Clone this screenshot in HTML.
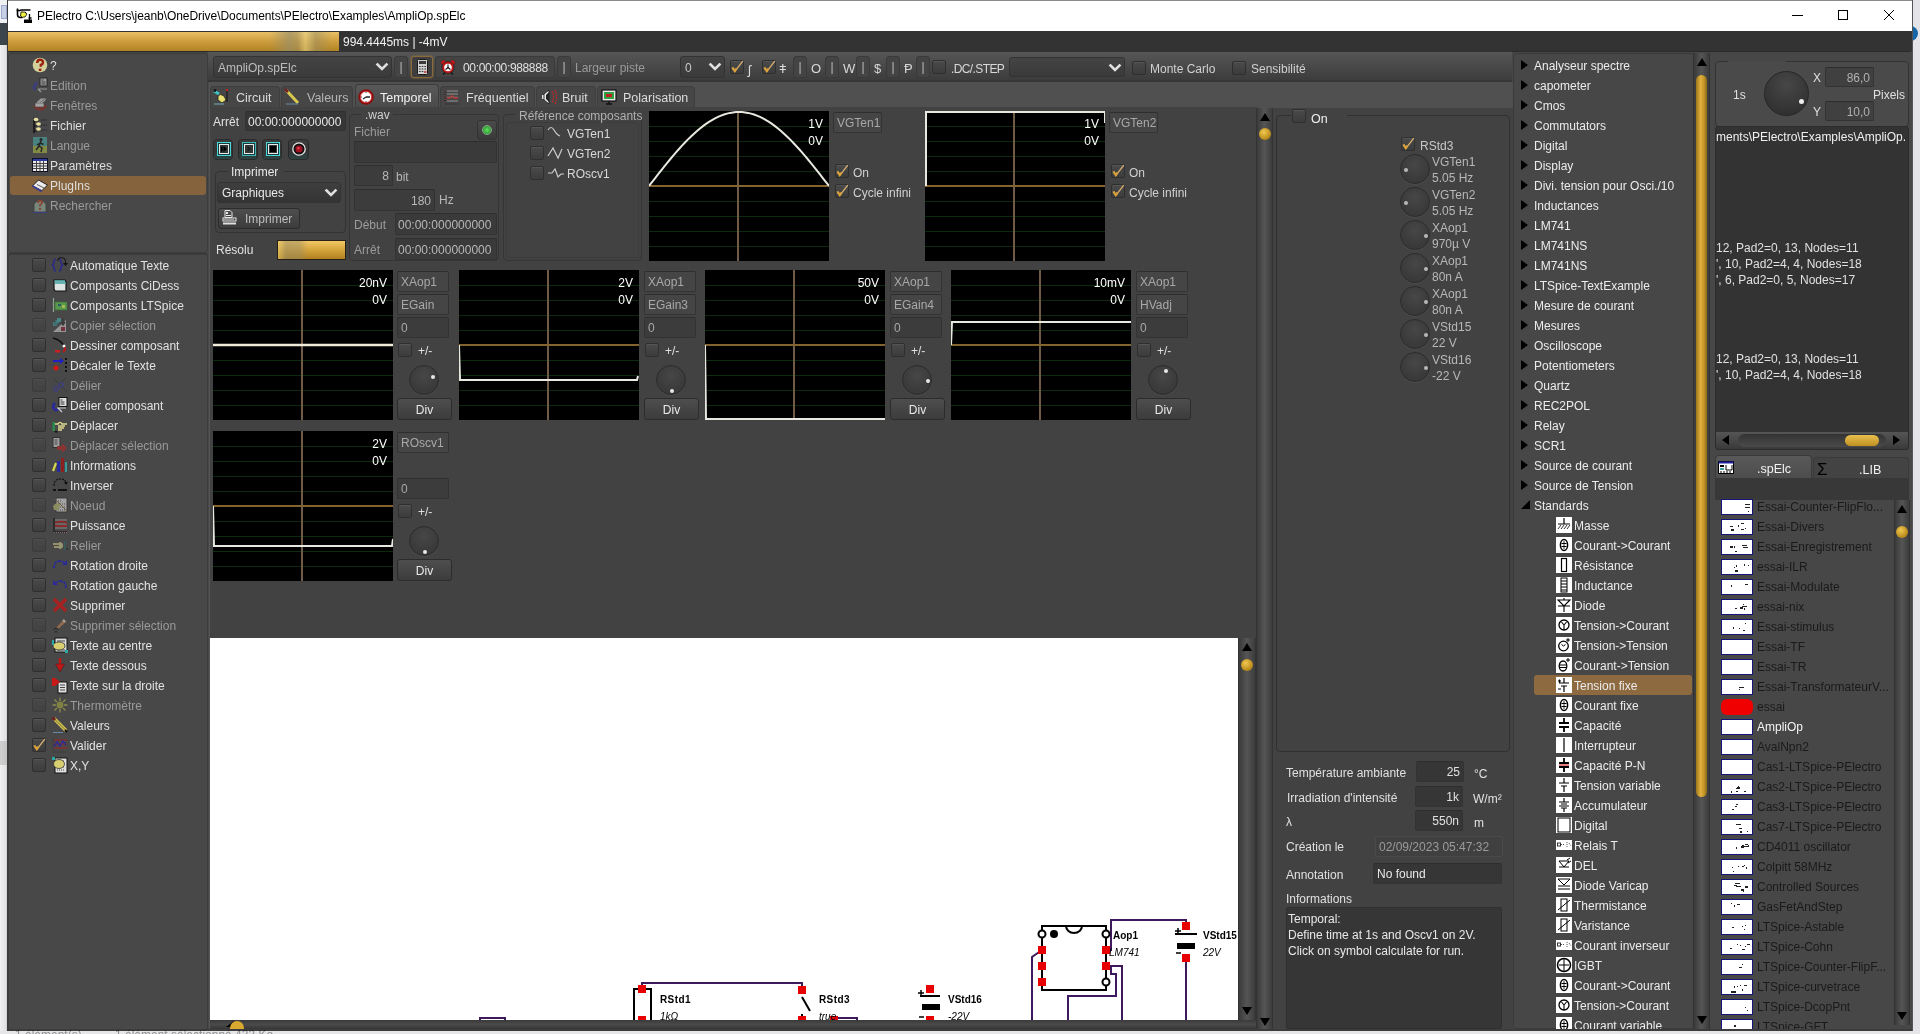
<!DOCTYPE html><html><head><meta charset='utf-8'><style>
*{margin:0;padding:0;box-sizing:border-box}
html,body{will-change:transform;width:1920px;height:1034px;overflow:hidden;background:#e6e8ee;font-family:"Liberation Sans",sans-serif;font-size:12px;color:#e6e6e6;position:relative}
div{position:absolute}
.t{white-space:nowrap;line-height:16px}
svg{overflow:visible}
</style></head><body>
<div style="left:0px;top:0px;width:8px;height:23px;background:#eef0f4"></div>
<div style="left:1px;top:5px;width:6px;height:14px;background:#c8d0e8;border:1px solid #9aa8d0"></div>
<div style="left:0px;top:23px;width:8px;height:22px;background:#3d454c"></div>
<div style="left:0px;top:45px;width:8px;height:989px;background:linear-gradient(90deg,#efeff1,#e2e2e4 70%,#bdbdbd)"></div>
<div style="left:0px;top:741px;width:7px;height:24px;background:linear-gradient(90deg,#d0d0d0,#c4c4c4)"></div>
<div style="left:1912px;top:0px;width:8px;height:1034px;background:#e4e4e8"></div>
<div style="left:1903px;top:26px;width:15px;height:15px;background:#1565a8;border-radius:50%"></div>
<div style="left:7px;top:0px;width:1906px;height:1031px;background:#474747;border-left:1px solid #3a3a3a;border-right:1px solid #555"></div>
<div style="left:8px;top:0px;width:1904px;height:1px;background:#8a8a8a"></div>
<div style="left:8px;top:1px;width:1904px;height:30px;background:#ffffff"></div>
<svg style="position:absolute;left:16px;top:8px" width="16" height="15" viewBox="0 0 16 15"><path d="M1.5 0.5 v6 q0 3 3 3 h2 M0.5 2.5 h2.5 M3 3 q1 -1 3 -1 h8.5" stroke="#000" stroke-width="1.6" fill="none"/><path d="M5 4 q4 -1 6 2 l-2 3 q-3 1 -4.5 -1z" fill="#f0f040" stroke="#000" stroke-width="0.8"/><circle cx="9.5" cy="4.5" r="0.7" fill="#000"/><path d="M13.5 6 v6 M12.5 10 h3" stroke="#000" stroke-width="1.3"/><rect x="8" y="11.5" width="8" height="3.5" fill="#000"/></svg>
<div class="t" style="left:37px;top:8px;color:#000;letter-spacing:-0.06px">PElectro C:\Users\jeanb\OneDrive\Documents\PElectro\Examples\AmpliOp.spElc</div>
<div style="left:1792px;top:15px;width:11px;height:1px;background:#000"></div>
<div style="left:1838px;top:10px;width:10px;height:10px;border:1px solid #000"></div>
<svg style="position:absolute;left:1884px;top:10px" width="10" height="10" viewBox="0 0 10 10"><path d="M0 0 L10 10 M10 0 L0 10" stroke="#000" stroke-width="1"/></svg>
<div style="left:8px;top:31px;width:1904px;height:21px;background:#333333;border-bottom:1px solid #2a2a2a;border-bottom-right-radius:3px"></div>
<div style="left:8px;top:32px;width:331px;height:19px;background:linear-gradient(90deg,rgba(150,140,100,0) 79%,rgba(150,140,105,.65) 85%,rgba(150,140,105,.45) 87.5%,rgba(235,215,140,.55) 89.8%,rgba(150,140,100,.5) 93%,rgba(150,140,100,0) 98%),linear-gradient(#e8c068,#d0a040 45%,#b08424)"></div>
<div class="t" style="left:343px;top:34px;color:#f2f2f2">994.4445ms | -4mV</div>
<div style="left:8px;top:53px;width:200px;height:200px;background:#484848;border:1px solid #3c3c3c;border-radius:3px"></div>
<div style="left:8px;top:253px;width:200px;height:777px;background:#484848;border:1px solid #3c3c3c;border-top:2px solid #3a3a3a;border-radius:3px"></div>
<div style="left:10px;top:176px;width:196px;height:19px;background:#85633c;border-radius:3px"></div>
<svg style="position:absolute;left:32px;top:57px;" width="16" height="16" viewBox="0 0 16 16"><circle cx="8" cy="8" r="7.3" fill="#d4d09a"/><path d="M5.2 6 q0 -3.2 2.9 -3.2 q2.9 0 2.9 2.6 q0 1.7 -2.2 2.5 v1.8" stroke="#9a2010" stroke-width="2.4" fill="none"/><rect x="6.8" y="11.6" width="2.6" height="2.4" fill="#9a2010"/></svg>
<div class="t" style="left:50px;top:58px;color:#dedede">?</div>
<svg style="position:absolute;left:32px;top:77px;opacity:0.6;" width="16" height="16" viewBox="0 0 16 16"><path d="M3 13 q-2 -3 0 -5 q2 -1 1 -3" stroke="#38389a" stroke-width="3" fill="none"/><rect x="8" y="1" width="7" height="8" fill="#d8d8d8" stroke="#111" stroke-width="1"/><path d="M9.5 3h2M9.5 5h4M9.5 7h4" stroke="#333"/><path d="M6 12 h9 M6 12 l3 3" stroke="#d0d0d0" stroke-width="1.2"/></svg>
<div class="t" style="left:50px;top:78px;color:#9a9a9a">Edition</div>
<svg style="position:absolute;left:32px;top:97px;opacity:0.6;" width="16" height="16" viewBox="0 0 16 16"><path d="M1 10 q7 7 14 0 l-1 -2 h-12z" fill="#9a2a20"/><rect x="3" y="6" width="9" height="4" fill="#e0e0e0" stroke="#333" stroke-width="0.6"/><path d="M5 6 l4 -4 h5 M7 6 l4 -4 M9 6 l4 -3" stroke="#d8d8d8" stroke-width="1.2" fill="none"/></svg>
<div class="t" style="left:50px;top:98px;color:#9a9a9a">Fenêtres</div>
<svg style="position:absolute;left:32px;top:117px;" width="16" height="16" viewBox="0 0 16 16"><path d="M2 1 v15" stroke="#111" stroke-width="1.4"/><path d="M2 4 h3 M2 9 h3 M2 14 h3" stroke="#111"/><ellipse cx="4" cy="2.5" rx="2.4" ry="1.8" fill="#e8e0a0"/><ellipse cx="6.5" cy="7" rx="2.4" ry="1.8" fill="#e8e0a0"/><ellipse cx="6.5" cy="12" rx="2.4" ry="1.8" fill="#e8e0a0"/><path d="M9 3h6 M9 8h6 M9 13h6" stroke="#223" stroke-dasharray="1.5 1"/></svg>
<div class="t" style="left:50px;top:118px;color:#dedede">Fichier</div>
<svg style="position:absolute;left:32px;top:137px;opacity:0.6;" width="16" height="16" viewBox="0 0 16 16"><rect x="1" y="0" width="14" height="16" fill="#4aa8a8"/><rect x="1" y="9" width="14" height="7" fill="#a8b840"/><circle cx="9" cy="2.5" r="1.5" fill="#111"/><path d="M9 4 l-2 5 l3 2 l-1 4 M7 9 l-3 4 M8.5 6 l3 1.5 M8 6 l-3 2" stroke="#111" stroke-width="1.5" fill="none"/></svg>
<div class="t" style="left:50px;top:138px;color:#9a9a9a">Langue</div>
<svg style="position:absolute;left:32px;top:157px;" width="16" height="16" viewBox="0 0 16 16"><rect x="0.5" y="1.5" width="15" height="13" fill="#e8e8e8" stroke="#112" stroke-width="1"/><rect x="1" y="2" width="14" height="2" fill="#2a3aa0"/><path d="M1 6.5 h14 M1 9 h14 M1 11.5 h14" stroke="#333" stroke-width="0.9"/><path d="M4.5 4 v10 M8 4 v10 M11.5 4 v10" stroke="#333" stroke-width="0.9"/></svg>
<div class="t" style="left:50px;top:158px;color:#dedede">Paramètres</div>
<svg style="position:absolute;left:32px;top:177px;" width="16" height="16" viewBox="0 0 16 16"><path d="M0.5 9 l6 -6 l9 5 l-6 6z" fill="#ececec" stroke="#222" stroke-width="1"/><path d="M3 10 l7 3.5 M5 7.5 l7 3.5" stroke="#333" stroke-width="0.8"/><path d="M0.5 9 l9 5.5" stroke="#3a3a9a" stroke-width="1.6"/></svg>
<div class="t" style="left:50px;top:178px;color:#dedede">PlugIns</div>
<svg style="position:absolute;left:32px;top:197px;opacity:0.6;" width="16" height="16" viewBox="0 0 16 16"><path d="M2 15 v-8 q6 -8 12 0 v8z" fill="#98b0a0" stroke="#333" stroke-width="0.8"/><path d="M6 6 q0 -2.5 2 -2.5 q2 0 2 2 q0 1.5 -2 2.5 v1.5" stroke="#b04020" stroke-width="1.8" fill="none"/><rect x="7" y="11" width="2" height="2" fill="#b04020"/><path d="M1 15.5 h14" stroke="#3a3aa0" stroke-width="1.2"/></svg>
<div class="t" style="left:50px;top:198px;color:#9a9a9a">Rechercher</div>
<div style="left:32px;top:258px;width:14px;height:14px;background:linear-gradient(#4a4a4a,#3c3c3c);border:1px solid #2f2f2f;border-radius:2px;box-shadow:inset 0 1px 0 #555"></div>
<svg style="position:absolute;left:52px;top:257px;" width="16" height="16" viewBox="0 0 16 16"><path d="M4 2 q-2 0 -2 3 q0 2 -1.5 3 q1.5 1 1.5 3 q0 3 2 3 M7 2 q2 0 2 3 q0 2 1.5 3 q-1.5 1 -1.5 3 q0 3 -2 3" stroke="#2a2a88" stroke-width="1.6" fill="none"/><path d="M5.5 4 q0 -3.5 4 -3.5 q4 0 4 4 v3" stroke="#111" stroke-width="1" fill="none"/><path d="M11 6 l2.5 3 l2.5 -3z" fill="#111"/></svg>
<div class="t" style="left:70px;top:258px;color:#e2e2e2">Automatique Texte</div>
<div style="left:32px;top:278px;width:14px;height:14px;background:linear-gradient(#4a4a4a,#3c3c3c);border:1px solid #2f2f2f;border-radius:2px;box-shadow:inset 0 1px 0 #555"></div>
<svg style="position:absolute;left:52px;top:277px;" width="16" height="16" viewBox="0 0 16 16"><path d="M2 3 h11 l1 2 v9 h-11 l-1 -2z" fill="#dde4e4" stroke="#111" stroke-width="1.2"/><path d="M2.5 4 h10.5 M3 6 h11" stroke="#40a0a0" stroke-width="1.3"/></svg>
<div class="t" style="left:70px;top:278px;color:#e2e2e2">Composants CiDess</div>
<div style="left:32px;top:298px;width:14px;height:14px;background:linear-gradient(#4a4a4a,#3c3c3c);border:1px solid #2f2f2f;border-radius:2px;box-shadow:inset 0 1px 0 #555"></div>
<svg style="position:absolute;left:52px;top:297px;" width="16" height="16" viewBox="0 0 16 16"><path d="M1.5 1 v14" stroke="#8aa890" stroke-width="1.2"/><rect x="3" y="5" width="12" height="8" fill="#58984a" stroke="#3a6a3a" stroke-width="0.6"/><rect x="6" y="7" width="3" height="2" fill="#2a5a6a"/><rect x="10" y="8" width="3" height="3" fill="#a8b850"/></svg>
<div class="t" style="left:70px;top:298px;color:#e2e2e2">Composants LTSpice</div>
<div style="opacity:0.5;left:32px;top:318px;width:14px;height:14px;background:linear-gradient(#4a4a4a,#3c3c3c);border:1px solid #2f2f2f;border-radius:2px;box-shadow:inset 0 1px 0 #555"></div>
<svg style="position:absolute;left:52px;top:317px;opacity:0.6;" width="16" height="16" viewBox="0 0 16 16"><rect x="1" y="5" width="4" height="4" fill="#3a9a9a"/><rect x="3" y="3" width="4" height="4" fill="#3a9a9a" stroke="#444" stroke-width="0.5"/><rect x="5" y="1" width="4" height="4" fill="#48b0b0"/><path d="M1 15 l13 -12 v12z" fill="#c8c8c8"/><rect x="9" y="10" width="4" height="4" fill="#902838"/><path d="M11 1 v6 M9 5 l2 3 l2 -3" stroke="#333" stroke-width="1.5" fill="none"/></svg>
<div class="t" style="left:70px;top:318px;color:#9a9a9a">Copier sélection</div>
<div style="left:32px;top:338px;width:14px;height:14px;background:linear-gradient(#4a4a4a,#3c3c3c);border:1px solid #2f2f2f;border-radius:2px;box-shadow:inset 0 1px 0 #555"></div>
<svg style="position:absolute;left:52px;top:337px;" width="16" height="16" viewBox="0 0 16 16"><path d="M1 1 q8 2 12 9" stroke="#111" stroke-width="1.4" fill="none"/><circle cx="12" cy="9" r="1.5" fill="#fff"/><path d="M13 10 q1 3 -2 5" stroke="#c01818" stroke-width="1.6" fill="none"/><rect x="3" y="13" width="5" height="2.5" fill="#c82020"/></svg>
<div class="t" style="left:70px;top:338px;color:#e2e2e2">Dessiner composant</div>
<div style="left:32px;top:358px;width:14px;height:14px;background:linear-gradient(#4a4a4a,#3c3c3c);border:1px solid #2f2f2f;border-radius:2px;box-shadow:inset 0 1px 0 #555"></div>
<svg style="position:absolute;left:52px;top:357px;" width="16" height="16" viewBox="0 0 16 16"><path d="M1 4 h8" stroke="#2020c0" stroke-width="2"/><path d="M8 1 l4 3 l-4 3z" fill="#2020c0"/><circle cx="4" cy="11" r="2.5" fill="#d01818"/><path d="M14 1 v15" stroke="#111" stroke-width="2" stroke-dasharray="2 2"/></svg>
<div class="t" style="left:70px;top:358px;color:#e2e2e2">Décaler le Texte</div>
<div style="opacity:0.5;left:32px;top:378px;width:14px;height:14px;background:linear-gradient(#4a4a4a,#3c3c3c);border:1px solid #2f2f2f;border-radius:2px;box-shadow:inset 0 1px 0 #555"></div>
<svg style="position:absolute;left:52px;top:377px;opacity:0.6;" width="16" height="16" viewBox="0 0 16 16"><path d="M1 1 l14 14 M14 1 q-6 4 -9 10" stroke="#333" stroke-width="1" fill="none"/><circle cx="4" cy="12" r="2.2" stroke="#3a3a9a" stroke-width="1.5" fill="none"/><circle cx="9" cy="8" r="2.2" stroke="#3a3a9a" stroke-width="1.5" fill="none"/></svg>
<div class="t" style="left:70px;top:378px;color:#9a9a9a">Délier</div>
<div style="left:32px;top:398px;width:14px;height:14px;background:linear-gradient(#4a4a4a,#3c3c3c);border:1px solid #2f2f2f;border-radius:2px;box-shadow:inset 0 1px 0 #555"></div>
<svg style="position:absolute;left:52px;top:397px;" width="16" height="16" viewBox="0 0 16 16"><path d="M3 6 q-3 3 -1 6 q2 2 4 0" stroke="#2a2a9a" stroke-width="2.6" fill="none"/><rect x="7" y="0.5" width="8" height="9" fill="#ddd" stroke="#111"/><path d="M8.5 3h2M8.5 5h4M8.5 7h4" stroke="#333"/><path d="M5 11 h9 M6 11 l4 4" stroke="#ccc" stroke-width="1.2"/></svg>
<div class="t" style="left:70px;top:398px;color:#e2e2e2">Délier composant</div>
<div style="left:32px;top:418px;width:14px;height:14px;background:linear-gradient(#4a4a4a,#3c3c3c);border:1px solid #2f2f2f;border-radius:2px;box-shadow:inset 0 1px 0 #555"></div>
<svg style="position:absolute;left:52px;top:417px;" width="16" height="16" viewBox="0 0 16 16"><rect x="0.5" y="5" width="2.5" height="9" fill="#2a8a4a"/><path d="M3 7 h3 q2 -3 4 0 h5 M6 9 h7 M6 11 h6 M6 13 h4" stroke="#e0d890" stroke-width="1.6"/><path d="M3 14 v1 h3" stroke="#111"/></svg>
<div class="t" style="left:70px;top:418px;color:#e2e2e2">Déplacer</div>
<div style="opacity:0.5;left:32px;top:438px;width:14px;height:14px;background:linear-gradient(#4a4a4a,#3c3c3c);border:1px solid #2f2f2f;border-radius:2px;box-shadow:inset 0 1px 0 #555"></div>
<svg style="position:absolute;left:52px;top:437px;opacity:0.6;" width="16" height="16" viewBox="0 0 16 16"><rect x="1" y="0.5" width="7" height="10" fill="#d8d8d8" stroke="#222"/><path d="M2.5 3h3M2.5 5h3M2.5 7h3" stroke="#444"/><path d="M5 9 h5 v-3 l5 5 l-5 5 v-3 h-5z" fill="#b82828"/></svg>
<div class="t" style="left:70px;top:438px;color:#9a9a9a">Déplacer sélection</div>
<div style="left:32px;top:458px;width:14px;height:14px;background:linear-gradient(#4a4a4a,#3c3c3c);border:1px solid #2f2f2f;border-radius:2px;box-shadow:inset 0 1px 0 #555"></div>
<svg style="position:absolute;left:52px;top:457px;" width="16" height="16" viewBox="0 0 16 16"><path d="M1 14 l3 -8" stroke="#d8d850" stroke-width="2.2"/><rect x="5" y="4" width="3" height="11" fill="#2a2a9a"/><rect x="9" y="1" width="3" height="14" fill="#902020"/><rect x="13" y="5" width="2" height="10" fill="#3a9a9a"/></svg>
<div class="t" style="left:70px;top:458px;color:#e2e2e2">Informations</div>
<div style="left:32px;top:478px;width:14px;height:14px;background:linear-gradient(#4a4a4a,#3c3c3c);border:1px solid #2f2f2f;border-radius:2px;box-shadow:inset 0 1px 0 #555"></div>
<svg style="position:absolute;left:52px;top:477px;" width="16" height="16" viewBox="0 0 16 16"><path d="M2 9 q0 -7 6 -7 q6 0 6 5" stroke="#111" stroke-width="1.2" fill="none" stroke-dasharray="2 1"/><path d="M12 5 l2 3 l2 -3z" fill="#111"/><path d="M1 13 h3 M6 13 h9" stroke="#111" stroke-width="2"/></svg>
<div class="t" style="left:70px;top:478px;color:#e2e2e2">Inverser</div>
<div style="opacity:0.5;left:32px;top:498px;width:14px;height:14px;background:linear-gradient(#4a4a4a,#3c3c3c);border:1px solid #2f2f2f;border-radius:2px;box-shadow:inset 0 1px 0 #555"></div>
<svg style="position:absolute;left:52px;top:497px;opacity:0.6;" width="16" height="16" viewBox="0 0 16 16"><rect x="4" y="1" width="11" height="14" fill="#e0e0e0" stroke="#333"/><path d="M6 4h4M6 7h7M6 10h7M6 13h7" stroke="#555" stroke-dasharray="1 1"/><path d="M1 9 q3 -4 7 -2 l-1 6 h-5z" fill="#b8b870"/><path d="M3 2 l12 12" stroke="#8a6a3a"/></svg>
<div class="t" style="left:70px;top:498px;color:#9a9a9a">Noeud</div>
<div style="left:32px;top:518px;width:14px;height:14px;background:linear-gradient(#4a4a4a,#3c3c3c);border:1px solid #2f2f2f;border-radius:2px;box-shadow:inset 0 1px 0 #555"></div>
<svg style="position:absolute;left:52px;top:517px;" width="16" height="16" viewBox="0 0 16 16"><path d="M2 1 v14 h13" stroke="#111" stroke-width="1" fill="none"/><path d="M3 3 h12 M3 7 h12 M3 11 h12" stroke="#888" stroke-width="1"/><path d="M3 6 q6 -3 12 0 M3 9 h12" stroke="#a02020" stroke-width="1.4" fill="none"/><path d="M2 15.5 h13" stroke="#8a6a6a" stroke-dasharray="1 1"/></svg>
<div class="t" style="left:70px;top:518px;color:#e2e2e2">Puissance</div>
<div style="opacity:0.5;left:32px;top:538px;width:14px;height:14px;background:linear-gradient(#4a4a4a,#3c3c3c);border:1px solid #2f2f2f;border-radius:2px;box-shadow:inset 0 1px 0 #555"></div>
<svg style="position:absolute;left:52px;top:537px;opacity:0.6;" width="16" height="16" viewBox="0 0 16 16"><path d="M1 7 h7 M2 10 h6" stroke="#c8c080" stroke-width="1.8"/><path d="M7 5 q4 0 4 3.5 q0 3.5 -4 3.5z" fill="#c8c890"/><rect x="12" y="4" width="1.5" height="9" fill="#2a6a6a"/><rect x="14.5" y="11" width="1.5" height="2" fill="#222"/></svg>
<div class="t" style="left:70px;top:538px;color:#9a9a9a">Relier</div>
<div style="left:32px;top:558px;width:14px;height:14px;background:linear-gradient(#4a4a4a,#3c3c3c);border:1px solid #2f2f2f;border-radius:2px;box-shadow:inset 0 1px 0 #555"></div>
<svg style="position:absolute;left:52px;top:557px;" width="16" height="16" viewBox="0 0 16 16"><path d="M2 11 q0 -7 6 -7 q3 0 5 3" stroke="#2a2a9a" stroke-width="1.8" fill="none" stroke-dasharray="3 1"/><path d="M10 8 h5 v-5z" fill="#2a2a9a"/></svg>
<div class="t" style="left:70px;top:558px;color:#e2e2e2">Rotation droite</div>
<div style="left:32px;top:578px;width:14px;height:14px;background:linear-gradient(#4a4a4a,#3c3c3c);border:1px solid #2f2f2f;border-radius:2px;box-shadow:inset 0 1px 0 #555"></div>
<svg style="position:absolute;left:52px;top:577px;" width="16" height="16" viewBox="0 0 16 16"><path d="M14 11 q0 -7 -6 -7 q-3 0 -5 3" stroke="#2a2a9a" stroke-width="1.8" fill="none" stroke-dasharray="3 1"/><path d="M6 8 h-5 v-5z" fill="#2a2a9a"/></svg>
<div class="t" style="left:70px;top:578px;color:#e2e2e2">Rotation gauche</div>
<div style="left:32px;top:598px;width:14px;height:14px;background:linear-gradient(#4a4a4a,#3c3c3c);border:1px solid #2f2f2f;border-radius:2px;box-shadow:inset 0 1px 0 #555"></div>
<svg style="position:absolute;left:52px;top:597px;" width="16" height="16" viewBox="0 0 16 16"><path d="M2 2 L14 14 M14 2 L2 14" stroke="#a82020" stroke-width="3.2"/></svg>
<div class="t" style="left:70px;top:598px;color:#e2e2e2">Supprimer</div>
<div style="opacity:0.5;left:32px;top:618px;width:14px;height:14px;background:linear-gradient(#4a4a4a,#3c3c3c);border:1px solid #2f2f2f;border-radius:2px;box-shadow:inset 0 1px 0 #555"></div>
<svg style="position:absolute;left:52px;top:617px;opacity:0.6;" width="16" height="16" viewBox="0 0 16 16"><path d="M4 11 l8 -9 l2.5 2.5 l-9 8z" fill="#c08050"/><path d="M11 3 l2 2" stroke="#ddd" stroke-width="2"/><circle cx="4" cy="13" r="2.6" fill="#222"/><path d="M1 15 q3 -4 6 0" stroke="#666" fill="none"/></svg>
<div class="t" style="left:70px;top:618px;color:#9a9a9a">Supprimer sélection</div>
<div style="left:32px;top:638px;width:14px;height:14px;background:linear-gradient(#4a4a4a,#3c3c3c);border:1px solid #2f2f2f;border-radius:2px;box-shadow:inset 0 1px 0 #555"></div>
<svg style="position:absolute;left:52px;top:637px;" width="16" height="16" viewBox="0 0 16 16"><rect x="3" y="1" width="12" height="14" fill="#d8d8d8" stroke="#111"/><path d="M5 4h8M5 7h8M5 10h8M5 13h8" stroke="#444"/><ellipse cx="7" cy="9" rx="6" ry="4" fill="#d8d070" stroke="#333" stroke-width="0.8"/><rect x="0" y="3" width="2" height="5" fill="#2aa8a8"/><rect x="13" y="13" width="3" height="3" fill="#2aa8a8"/></svg>
<div class="t" style="left:70px;top:638px;color:#e2e2e2">Texte au centre</div>
<div style="left:32px;top:658px;width:14px;height:14px;background:linear-gradient(#4a4a4a,#3c3c3c);border:1px solid #2f2f2f;border-radius:2px;box-shadow:inset 0 1px 0 #555"></div>
<svg style="position:absolute;left:52px;top:657px;" width="16" height="16" viewBox="0 0 16 16"><path d="M8 1 v7" stroke="#c01818" stroke-width="2.5"/><path d="M3.5 7 l4.5 8 l4.5 -8z" fill="#c01818" stroke="#511" stroke-width="0.5"/></svg>
<div class="t" style="left:70px;top:658px;color:#e2e2e2">Texte dessous</div>
<div style="left:32px;top:678px;width:14px;height:14px;background:linear-gradient(#4a4a4a,#3c3c3c);border:1px solid #2f2f2f;border-radius:2px;box-shadow:inset 0 1px 0 #555"></div>
<svg style="position:absolute;left:52px;top:677px;" width="16" height="16" viewBox="0 0 16 16"><rect x="6" y="5" width="9" height="11" fill="#e0e0e0" stroke="#111"/><path d="M8 8h5M8 10.5h5M8 13h5" stroke="#444"/><path d="M0 1 l3 0 l5 4 l-5 4 h-3z" fill="#c81818"/></svg>
<div class="t" style="left:70px;top:678px;color:#e2e2e2">Texte sur la droite</div>
<div style="opacity:0.5;left:32px;top:698px;width:14px;height:14px;background:linear-gradient(#4a4a4a,#3c3c3c);border:1px solid #2f2f2f;border-radius:2px;box-shadow:inset 0 1px 0 #555"></div>
<svg style="position:absolute;left:52px;top:697px;opacity:0.6;" width="16" height="16" viewBox="0 0 16 16"><circle cx="8" cy="8" r="3.4" fill="#a8a840"/><path d="M8 0.5 v3.5 M8 12 v3.5 M0.5 8 h3.5 M12 8 h3.5 M2.5 2.5 l2.5 2.5 M11 11 l2.5 2.5 M13.5 2.5 l-2.5 2.5 M2.5 13.5 l2.5 -2.5" stroke="#b8b850" stroke-width="1.3"/></svg>
<div class="t" style="left:70px;top:698px;color:#9a9a9a">Thermomètre</div>
<div style="left:32px;top:718px;width:14px;height:14px;background:linear-gradient(#4a4a4a,#3c3c3c);border:1px solid #2f2f2f;border-radius:2px;box-shadow:inset 0 1px 0 #555"></div>
<svg style="position:absolute;left:52px;top:717px;" width="16" height="16" viewBox="0 0 16 16"><path d="M2 1.5 l12 12" stroke="#d8c850" stroke-width="3.4"/><path d="M2 1.5 l12 12" stroke="#222" stroke-width="0.6"/><path d="M0.5 0.5 l2.5 2.5" stroke="#702020" stroke-width="3"/><path d="M13 13 l2 2" stroke="#111" stroke-width="2"/><path d="M1 15.5 h10" stroke="#68a" /></svg>
<div class="t" style="left:70px;top:718px;color:#e2e2e2">Valeurs</div>
<div style="left:32px;top:738px;width:14px;height:14px;background:linear-gradient(#4a4a4a,#3c3c3c);border:1px solid #2f2f2f;border-radius:2px;box-shadow:inset 0 1px 0 #555"><svg width="14" height="14" viewBox="0 0 14 14" style="position:absolute;left:-1px;top:-1px"><path d="M2 7.5 L4.8 11.5 L12.8 1.2" stroke="#d8b070" stroke-width="1.3" fill="none"/><path d="M2.6 7.6 L4.8 11 L6.5 8.6" stroke="#d8a038" stroke-width="2.2" fill="none"/></svg></div>
<svg style="position:absolute;left:52px;top:737px;" width="16" height="16" viewBox="0 0 16 16"><path d="M1 1 v14 h14" stroke="#333" fill="none" stroke-dasharray="1 1"/><path d="M2 3 h13 M2 7 h13 M2 11 h13" stroke="#a02020" stroke-width="1.2"/><path d="M2 10 l3 -5 l3 4 l3 -5 l3 4" stroke="#2a2aa0" stroke-width="1.3" fill="none"/></svg>
<div class="t" style="left:70px;top:738px;color:#e2e2e2">Valider</div>
<div style="left:32px;top:758px;width:14px;height:14px;background:linear-gradient(#4a4a4a,#3c3c3c);border:1px solid #2f2f2f;border-radius:2px;box-shadow:inset 0 1px 0 #555"></div>
<svg style="position:absolute;left:52px;top:757px;" width="16" height="16" viewBox="0 0 16 16"><rect x="3" y="1" width="12" height="15" fill="#e0e0e0" stroke="#111"/><path d="M5 4h8M5 7h8M5 10h8M5 13h8" stroke="#444" stroke-dasharray="1 1"/><ellipse cx="7" cy="7" rx="5.5" ry="4.5" fill="#d8d070" stroke="#333" stroke-width="0.8"/><rect x="0" y="0" width="3" height="3" fill="#2aa8a8"/></svg>
<div class="t" style="left:70px;top:758px;color:#e2e2e2">X,Y</div>
<div style="left:208px;top:51px;width:1304px;height:31px;background:linear-gradient(#565656,#3c3c3c);border-top:1px solid #333;border-bottom:2px solid #363636"></div>
<div style="left:213px;top:56px;width:179px;height:22px;background:linear-gradient(#444,#3a3a3a);border:1px solid #333;border-radius:3px;color:#bdbdbd;padding-left:4px;line-height:22px;white-space:nowrap">AmpliOp.spElc<svg width="12" height="8" viewBox="0 0 12 8" style="position:absolute;right:3px;top:6px"><path d="M1.5 1.5 L6 6 L10.5 1.5" stroke="#e0e0e0" stroke-width="2.6" fill="none" stroke-linecap="square"/></svg></div>
<div style="left:394px;top:56px;width:14px;height:22px;background:#444;border:1px solid #3a3a3a;border-radius:3px;color:#bbb;text-align:center;line-height:20px">|</div>
<div style="left:411px;top:56px;width:22px;height:22px;background:#3e3e3e;border:1px solid #8a6a3a;border-radius:3px;box-shadow:0 0 2px #a07a40"></div>
<svg style="position:absolute;left:417px;top:59px" width="11" height="16" viewBox="0 0 11 16"><rect x="0.5" y="0.5" width="10" height="15" rx="1" fill="#d0d0d0" stroke="#1a1a1a"/><rect x="2" y="2" width="7" height="3" fill="#3a3a3a"/><path d="M2 7.5h1.6M4.7 7.5h1.6M7.4 7.5h1.6M2 10h1.6M4.7 10h1.6M7.4 10h1.6M2 12.5h1.6M4.7 12.5h1.6" stroke="#333" stroke-width="1.2"/><path d="M7 13h2.5" stroke="#c02020" stroke-width="1.4"/></svg>
<div style="left:435px;top:56px;width:120px;height:22px;background:#444;border:1px solid #3a3a3a;border-radius:3px"></div>
<svg style="position:absolute;left:440px;top:59px" width="16" height="16" viewBox="0 0 16 16"><circle cx="3.5" cy="3.5" r="2.6" fill="#c81818" stroke="#333" stroke-width="0.6"/><circle cx="12.5" cy="3.5" r="2.6" fill="#c81818" stroke="#333" stroke-width="0.6"/><circle cx="8" cy="8.5" r="6" fill="#c81818" stroke="#222" stroke-width="0.8"/><circle cx="8" cy="8.5" r="3.8" fill="#fff"/><path d="M8 8.5 L8 5.5 M8 8.5 L10.5 10.5 M8 8.5 L5.5 10.5" stroke="#111" stroke-width="1.1"/><path d="M3 15.5 l2 -2 M13 15.5 l-2 -2" stroke="#111" stroke-width="1.2"/></svg>
<div class="t" style="left:463px;top:60px;color:#e0e0e0;letter-spacing:-0.35px">00:00:00:988888</div>
<div style="left:557px;top:56px;width:14px;height:22px;background:#444;border:1px solid #3a3a3a;border-radius:3px;color:#bbb;text-align:center;line-height:20px">|</div>
<div class="t" style="left:575px;top:60px;color:#9a9a9a">Largeur piste</div>
<div style="left:680px;top:56px;width:45px;height:22px;background:linear-gradient(#444,#3a3a3a);border:1px solid #333;border-radius:3px;color:#c8c8c8;padding-left:4px;line-height:22px;white-space:nowrap">0<svg width="12" height="8" viewBox="0 0 12 8" style="position:absolute;right:3px;top:6px"><path d="M1.5 1.5 L6 6 L10.5 1.5" stroke="#e0e0e0" stroke-width="2.6" fill="none" stroke-linecap="square"/></svg></div>
<div style="left:730px;top:60px;width:14px;height:14px;background:linear-gradient(#4a4a4a,#3c3c3c);border:1px solid #2f2f2f;border-radius:2px;box-shadow:inset 0 1px 0 #555"><svg width="14" height="14" viewBox="0 0 14 14" style="position:absolute;left:-1px;top:-1px"><path d="M2 7.5 L4.8 11.5 L12.8 1.2" stroke="#d8b070" stroke-width="1.3" fill="none"/><path d="M2.6 7.6 L4.8 11 L6.5 8.6" stroke="#d8a038" stroke-width="2.2" fill="none"/></svg></div>
<div class="t" style="left:748px;top:62px;color:#ddd;font-size:13px">ʃ</div>
<div style="left:762px;top:60px;width:14px;height:14px;background:linear-gradient(#4a4a4a,#3c3c3c);border:1px solid #2f2f2f;border-radius:2px;box-shadow:inset 0 1px 0 #555"><svg width="14" height="14" viewBox="0 0 14 14" style="position:absolute;left:-1px;top:-1px"><path d="M2 7.5 L4.8 11.5 L12.8 1.2" stroke="#d8b070" stroke-width="1.3" fill="none"/><path d="M2.6 7.6 L4.8 11 L6.5 8.6" stroke="#d8a038" stroke-width="2.2" fill="none"/></svg></div>
<div class="t" style="left:779px;top:61px;color:#ddd;font-size:13px">ǂ</div>
<div style="left:793px;top:56px;width:14px;height:22px;background:#444;border:1px solid #3a3a3a;border-radius:3px;color:#bbb;text-align:center;line-height:20px">|</div>
<div class="t" style="left:811px;top:61px;color:#d8d8d8;font-size:13px">O</div>
<div style="left:825px;top:56px;width:14px;height:22px;background:#444;border:1px solid #3a3a3a;border-radius:3px;color:#bbb;text-align:center;line-height:20px">|</div>
<div class="t" style="left:843px;top:61px;color:#d8d8d8;font-size:13px">W</div>
<div style="left:856px;top:56px;width:14px;height:22px;background:#444;border:1px solid #3a3a3a;border-radius:3px;color:#bbb;text-align:center;line-height:20px">|</div>
<div class="t" style="left:874px;top:61px;color:#d8d8d8;font-size:13px">$</div>
<div style="left:886px;top:56px;width:14px;height:22px;background:#444;border:1px solid #3a3a3a;border-radius:3px;color:#bbb;text-align:center;line-height:20px">|</div>
<div class="t" style="left:904px;top:61px;color:#d8d8d8;font-size:13px">Ᵽ</div>
<div style="left:916px;top:56px;width:14px;height:22px;background:#444;border:1px solid #3a3a3a;border-radius:3px;color:#bbb;text-align:center;line-height:20px">|</div>
<div style="left:932px;top:60px;width:14px;height:14px;background:linear-gradient(#4a4a4a,#3c3c3c);border:1px solid #2f2f2f;border-radius:2px;box-shadow:inset 0 1px 0 #555"></div>
<div class="t" style="left:951px;top:61px;color:#d8d8d8;letter-spacing:-0.6px">.DC/.STEP</div>
<div style="left:1009px;top:57px;width:116px;height:20px;background:linear-gradient(#444,#3a3a3a);border:1px solid #333;border-radius:3px;color:#cfcfcf;padding-left:4px;line-height:20px;white-space:nowrap"><svg width="12" height="8" viewBox="0 0 12 8" style="position:absolute;right:3px;top:6px"><path d="M1.5 1.5 L6 6 L10.5 1.5" stroke="#e0e0e0" stroke-width="2.6" fill="none" stroke-linecap="square"/></svg></div>
<div style="left:1132px;top:61px;width:14px;height:14px;background:linear-gradient(#4a4a4a,#3c3c3c);border:1px solid #2f2f2f;border-radius:2px;box-shadow:inset 0 1px 0 #555"></div>
<div class="t" style="left:1150px;top:61px;color:#d0d0d0">Monte Carlo</div>
<div style="left:1232px;top:61px;width:14px;height:14px;background:linear-gradient(#4a4a4a,#3c3c3c);border:1px solid #2f2f2f;border-radius:2px;box-shadow:inset 0 1px 0 #555"></div>
<div class="t" style="left:1251px;top:61px;color:#d0d0d0">Sensibilité</div>
<div style="left:208px;top:82px;width:1305px;height:26px;background:#505050"></div>
<div style="left:208px;top:82px;width:2px;height:950px;background:linear-gradient(90deg,#3e3e3e,#555 60%)"></div>
<div style="left:210px;top:86px;width:70px;height:21px;background:#464646;border:1px solid #3e3e3e;border-bottom:none;border-radius:4px 4px 0 0"></div>
<svg style="position:absolute;left:213px;top:89px" width="16" height="16" viewBox="0 0 16 16"><path d="M1 2 l5 3" stroke="#40c0c0" stroke-width="3"/><path d="M1 1 l2 1" stroke="#111" stroke-width="3"/><path d="M5 7 q2 -3 6 0 l2 4 l-4 3 l-4 -3z" fill="#e8e070" stroke="#222" stroke-width="0.8"/><path d="M14 1 v12" stroke="#111"/><rect x="13" y="0" width="2" height="2" fill="#c02020"/><path d="M1 15 h10" stroke="#7ab"/></svg>
<div class="t" style="left:236px;top:90px;color:#dcdcdc;font-size:12.5px">Circuit</div>
<div style="left:281px;top:86px;width:72px;height:21px;background:#464646;border:1px solid #3e3e3e;border-bottom:none;border-radius:4px 4px 0 0"></div>
<svg style="position:absolute;left:284px;top:89px" width="16" height="16" viewBox="0 0 16 16"><path d="M2 1 l12 13" stroke="#d8c850" stroke-width="3"/><path d="M1 0 l3 3" stroke="#702020" stroke-width="2.5"/><path d="M2 15 h12" stroke="#68a" /></svg>
<div class="t" style="left:307px;top:90px;color:#b4b4b4;font-size:12.5px">Valeurs</div>
<div style="left:355px;top:84px;width:84px;height:24px;background:linear-gradient(#585858,#4a4a4a);border:1px solid #3c3c3c;border-bottom:none;border-radius:4px 4px 0 0"></div>
<svg style="position:absolute;left:358px;top:89px" width="16" height="16" viewBox="0 0 16 16"><circle cx="8" cy="8" r="6.8" fill="#fff" stroke="#8a1010" stroke-width="2"/><circle cx="8" cy="8" r="5.6" fill="none" stroke="#d02020" stroke-width="0.8"/><path d="M8 8 h4 M8 8 l-3 2" stroke="#222" stroke-width="1.3"/><path d="M8 3 v1 M3 8 h1 M8 12 v1" stroke="#444"/></svg>
<div class="t" style="left:380px;top:90px;color:#f2f2f2;font-size:12.5px">Temporel</div>
<div style="left:440px;top:86px;width:95px;height:21px;background:#464646;border:1px solid #3e3e3e;border-bottom:none;border-radius:4px 4px 0 0"></div>
<svg style="position:absolute;left:444px;top:89px" width="16" height="16" viewBox="0 0 16 16"><path d="M1 1 v14 h14" stroke="#222" fill="none" stroke-width="1.2" stroke-dasharray="1 1"/><path d="M1 1 v14" stroke="#b44" stroke-width="0.6" stroke-dasharray="1 2"/><path d="M3 2 h11 M3 5 h11 M3 12 h11" stroke="#a8a8a8" stroke-width="0.8"/><path d="M3 9 h3 q2 -4 4 0 h4" stroke="#c82828" stroke-width="1.4" fill="none"/><path d="M3 8 h11" stroke="#888" stroke-width="0.6"/></svg>
<div class="t" style="left:466px;top:90px;color:#dcdcdc;font-size:12.5px">Fréquentiel</div>
<div style="left:536px;top:86px;width:60px;height:21px;background:#464646;border:1px solid #3e3e3e;border-bottom:none;border-radius:4px 4px 0 0"></div>
<svg style="position:absolute;left:541px;top:89px" width="16" height="16" viewBox="0 0 16 16"><path d="M1 6 h2 v4 h-2z" fill="#ddd"/><path d="M3 5 l5 -4 v14 l-5 -4z" fill="#e8e8e8" stroke="#111" stroke-width="0.8"/><path d="M5 6 l3 -3 v10 l-3 -3z" fill="#222"/><path d="M11 2 q3 6 0 12 M14 1 q3 7 0 14" stroke="#c82828" stroke-width="1.3" fill="none" stroke-dasharray="1.5 1"/></svg>
<div class="t" style="left:562px;top:90px;color:#dcdcdc;font-size:12.5px">Bruit</div>
<div style="left:597px;top:86px;width:98px;height:21px;background:#464646;border:1px solid #3e3e3e;border-bottom:none;border-radius:4px 4px 0 0"></div>
<svg style="position:absolute;left:601px;top:89px" width="16" height="16" viewBox="0 0 16 16"><rect x="1" y="1" width="14" height="11" fill="#e8e8e8" stroke="#111" stroke-width="1.2"/><rect x="3" y="3" width="10" height="7" fill="#30a040"/><rect x="5" y="5" width="6" height="3" fill="#c02020"/><path d="M5 15 h6 M8 12 v3" stroke="#111" stroke-width="1.3"/></svg>
<div class="t" style="left:623px;top:90px;color:#dcdcdc;font-size:12.5px">Polarisation</div>
<div style="left:210px;top:107px;width:1047px;height:531px;background:#424242"></div>
<div class="t" style="left:213px;top:114px;color:#e0e0e0">Arrêt</div>
<div style="left:245px;top:111px;width:101px;height:20px;background:#363636;border:1px solid #333;border-top-color:#2e2e2e;border-radius:2px;color:#e8e8e8;text-align:left;padding:0 2px;line-height:20px;white-space:nowrap;overflow:hidden;">00:00:000000000</div>
<div style="left:213px;top:139px;width:20px;height:21px;background:linear-gradient(#3c3c3c,#343434 60%,#2c4444);border:1px solid #2a2a2a;border-radius:4px"><svg style="position:absolute;left:3px;top:2px" width="14" height="14" viewBox="0 0 14 14"><rect x="0.5" y="0.5" width="13" height="13" fill="#1a3a3a" stroke="#48d8d8" stroke-width="1"/><rect x="2.5" y="2.5" width="9" height="9" fill="#303838" stroke="#e8e8e8" stroke-width="1"/><rect x="4" y="4.5" width="1.6" height="5" fill="#000"/><path d="M6.5 4 L10 7 L6.5 10z" fill="#000"/></svg></div>
<div style="left:238px;top:139px;width:20px;height:21px;background:linear-gradient(#3c3c3c,#343434 60%,#2c4444);border:1px solid #2a2a2a;border-radius:4px"><svg style="position:absolute;left:3px;top:2px" width="14" height="14" viewBox="0 0 14 14"><rect x="0.5" y="0.5" width="13" height="13" fill="#1a3a3a" stroke="#3cb8b8" stroke-width="1"/><rect x="2.5" y="2.5" width="9" height="9" fill="#303838" stroke="#e8e8e8" stroke-width="1"/><path d="M5.5 4 L9.5 7 L5.5 10z" fill="#222"/></svg></div>
<div style="left:262px;top:139px;width:20px;height:21px;background:linear-gradient(#3c3c3c,#343434 60%,#2c4444);border:1px solid #2a2a2a;border-radius:4px"><svg style="position:absolute;left:3px;top:2px" width="14" height="14" viewBox="0 0 14 14"><rect x="0.5" y="0.5" width="13" height="13" fill="#1a3a3a" stroke="#48d8d8" stroke-width="1"/><rect x="2.5" y="2.5" width="9" height="9" fill="#303838" stroke="#e8e8e8" stroke-width="1"/><rect x="4" y="4" width="6" height="6" fill="#000"/></svg></div>
<div style="left:288px;top:139px;width:21px;height:21px;background:linear-gradient(#3c3c3c,#343434 60%,#2c4444);border:1px solid #2a2a2a;border-radius:4px"><svg style="position:absolute;left:2px;top:1px" width="16" height="16" viewBox="0 0 16 16"><circle cx="8" cy="8" r="6.2" fill="#111" stroke="#e8e8e8" stroke-width="1.3"/><circle cx="8" cy="8" r="3.6" fill="#a01020"/><circle cx="7.4" cy="7.2" r="1.2" fill="#d84050"/></svg></div>
<div style="left:215px;top:171px;width:131px;height:62px;border:1px solid #333;border-radius:4px;background:#424242"></div>
<div style="left:228px;top:165px;width:56px;height:12px;background:#424242"></div>
<div class="t" style="left:231px;top:164px;color:#e8e8e8">Imprimer</div>
<div style="left:217px;top:182px;width:124px;height:21px;background:linear-gradient(#3e3e3e,#343434);border:1px solid #333;border-radius:3px;color:#e8e8e8;padding-left:4px;line-height:21px;white-space:nowrap">Graphiques<svg width="12" height="8" viewBox="0 0 12 8" style="position:absolute;right:3px;top:6px"><path d="M1.5 1.5 L6 6 L10.5 1.5" stroke="#e0e0e0" stroke-width="2.6" fill="none" stroke-linecap="square"/></svg></div>
<div style="left:218px;top:208px;width:82px;height:21px;background:linear-gradient(#4e4e4e,#3c3c3c);border:1px solid #2c2c2c;border-radius:3px;color:#e8e8e8;text-align:center;line-height:21px;white-space:nowrap;text-align:left"></div>
<svg style="position:absolute;left:222px;top:210px" width="15" height="15" viewBox="0 0 15 15"><path d="M3 0.5 h5 l2 2 v5 h-7z" fill="none" stroke="#e8e8e8" stroke-width="1"/><rect x="4" y="2" width="2" height="2" fill="#e8e8e8"/><path d="M4 5.5 h5" stroke="#e8e8e8"/><rect x="1" y="8" width="13" height="3" fill="none" stroke="#e8e8e8" stroke-width="1"/><path d="M2.5 9.5 h10" stroke="#e8e8e8" stroke-dasharray="1 1"/><rect x="1" y="12.5" width="13" height="2" fill="#e0e0e0"/></svg>
<div class="t" style="left:245px;top:211px;color:#bdbdbd">Imprimer</div>
<div class="t" style="left:216px;top:242px;color:#e0e0e0">Résolu</div>
<div style="left:277px;top:240px;width:69px;height:20px;border:1px solid #262016;background:linear-gradient(90deg,rgba(240,210,110,.5) 0%,rgba(150,140,105,.5) 12%,rgba(150,140,105,.45) 32%,rgba(150,140,105,0) 45%),linear-gradient(#f2c866,#d4a43c 50%,#b08020)"></div>
<div style="left:349px;top:114px;width:150px;height:147px;border:1px solid #353535;border-radius:4px;background:#424242"></div>
<div style="left:361px;top:108px;width:32px;height:14px;background:#424242"></div>
<div class="t" style="left:365px;top:107px;color:#d0d0d0">.wav</div>
<div class="t" style="left:354px;top:124px;color:#9c9c9c">Fichier</div>
<div style="left:477px;top:120px;width:20px;height:20px;background:linear-gradient(#4a4a4a,#3a3a3a);border:1px solid #333;border-radius:3px"><div style="left:4px;top:4px;width:10px;height:10px;border-radius:50%;background:radial-gradient(#60e060,#208020);border:1px solid #8a8"></div></div>
<div style="left:354px;top:141px;width:143px;height:22px;background:#3a3a3a;border:1px solid #333;border-top-color:#2e2e2e;border-radius:2px;color:#e0e0e0;text-align:left;padding:0 3px;line-height:22px;white-space:nowrap;overflow:hidden;"></div>
<div style="left:354px;top:165px;width:39px;height:21px;background:#3c3c3c;border:1px solid #333;border-top-color:#2e2e2e;border-radius:2px;color:#b8b8b8;text-align:right;padding:0 3px;line-height:21px;white-space:nowrap;overflow:hidden;">8</div>
<div class="t" style="left:396px;top:169px;color:#b8b8b8">bit</div>
<div style="left:354px;top:189px;width:81px;height:22px;background:#3c3c3c;border:1px solid #333;border-top-color:#2e2e2e;border-radius:2px;color:#b8b8b8;text-align:right;padding:0 3px;line-height:22px;white-space:nowrap;overflow:hidden;">180</div>
<div class="t" style="left:439px;top:192px;color:#b8b8b8">Hz</div>
<div class="t" style="left:354px;top:217px;color:#9c9c9c">Début</div>
<div style="left:395px;top:213px;width:102px;height:22px;background:#3a3a3a;border:1px solid #333;border-top-color:#2e2e2e;border-radius:2px;color:#b8b8b8;text-align:left;padding:0 2px;line-height:22px;white-space:nowrap;overflow:hidden;">00:00:000000000</div>
<div class="t" style="left:354px;top:242px;color:#9c9c9c">Arrêt</div>
<div style="left:395px;top:238px;width:102px;height:22px;background:#3a3a3a;border:1px solid #333;border-top-color:#2e2e2e;border-radius:2px;color:#b8b8b8;text-align:left;padding:0 2px;line-height:22px;white-space:nowrap;overflow:hidden;">00:00:000000000</div>
<div style="left:503px;top:114px;width:139px;height:147px;border:1px solid #353535;border-radius:4px;background:#424242"></div>
<div style="left:506px;top:122px;width:133px;height:136px;border:1px solid #3c3c3c;border-radius:3px"></div>
<div style="left:515px;top:108px;width:126px;height:14px;background:#424242"></div>
<div class="t" style="left:519px;top:108px;color:#b0b0b0">Référence composants</div>
<div style="left:530px;top:126px;width:14px;height:14px;background:linear-gradient(#4a4a4a,#3c3c3c);border:1px solid #2f2f2f;border-radius:2px;box-shadow:inset 0 1px 0 #555"></div>
<svg style="position:absolute;left:548px;top:127px" width="16" height="12"><path d="M0 3 q3 -5 6 0 q3 5 6 6" stroke="#ccc" fill="none" stroke-width="1.2"/></svg>
<div class="t" style="left:567px;top:126px;color:#d8d8d8">VGTen1</div>
<div style="left:530px;top:146px;width:14px;height:14px;background:linear-gradient(#4a4a4a,#3c3c3c);border:1px solid #2f2f2f;border-radius:2px;box-shadow:inset 0 1px 0 #555"></div>
<svg style="position:absolute;left:548px;top:147px" width="16" height="12"><path d="M0 9 l5 -8 l5 10 l4 -9" stroke="#ccc" fill="none" stroke-width="1.2"/></svg>
<div class="t" style="left:567px;top:146px;color:#d8d8d8">VGTen2</div>
<div style="left:530px;top:166px;width:14px;height:14px;background:linear-gradient(#4a4a4a,#3c3c3c);border:1px solid #2f2f2f;border-radius:2px;box-shadow:inset 0 1px 0 #555"></div>
<svg style="position:absolute;left:548px;top:167px" width="16" height="12"><path d="M0 6 h4 l3 -4 l3 8 l3 -3 h3" stroke="#ccc" fill="none" stroke-width="1.2"/></svg>
<div class="t" style="left:567px;top:166px;color:#d8d8d8">ROscv1</div>
<div style="left:649px;top:111px;width:180px;height:150px;background:#000;overflow:hidden"><div style="left:0;top:15px;width:180px;height:1px;background:#0e2a0e"></div><div style="left:0;top:30px;width:180px;height:1px;background:#0e2a0e"></div><div style="left:0;top:45px;width:180px;height:1px;background:#0e2a0e"></div><div style="left:0;top:60px;width:180px;height:1px;background:#0e2a0e"></div><div style="left:0;top:90px;width:180px;height:1px;background:#0e2a0e"></div><div style="left:0;top:105px;width:180px;height:1px;background:#0e2a0e"></div><div style="left:0;top:120px;width:180px;height:1px;background:#0e2a0e"></div><div style="left:0;top:135px;width:180px;height:1px;background:#0e2a0e"></div><div style="left:88px;top:0;width:2px;height:150px;background:#6e5c48"></div><div style="left:0;top:74px;width:180px;height:2px;background:#84642e"></div><svg style="position:absolute;left:0;top:0" width="180" height="150"><polyline points="0.0,75.0 3.0,71.1 6.0,67.3 9.0,63.4 12.0,59.6 15.0,55.8 18.0,52.1 21.0,48.5 24.0,44.9 27.0,41.4 30.0,38.0 33.0,34.7 36.0,31.5 39.0,28.4 42.0,25.5 45.0,22.7 48.0,20.0 51.0,17.5 54.0,15.1 57.0,12.9 60.0,10.9 63.0,9.1 66.0,7.4 69.0,5.9 72.0,4.6 75.0,3.5 78.0,2.6 81.0,1.9 84.0,1.4 87.0,1.1 90.0,1.0 93.0,1.1 96.0,1.4 99.0,1.9 102.0,2.6 105.0,3.5 108.0,4.6 111.0,5.9 114.0,7.4 117.0,9.1 120.0,10.9 123.0,12.9 126.0,15.1 129.0,17.5 132.0,20.0 135.0,22.7 138.0,25.5 141.0,28.4 144.0,31.5 147.0,34.7 150.0,38.0 153.0,41.4 156.0,44.9 159.0,48.5 162.0,52.1 165.0,55.8 168.0,59.6 171.0,63.4 174.0,67.3 177.0,71.1 180.0,75.0" stroke="#e8e8e0" stroke-width="2" fill="none"/></svg><div class="t" style="right:6px;top:5px;color:#fff;text-align:right">1V</div><div class="t" style="right:6px;top:22px;color:#fff">0V</div></div>
<div style="left:925px;top:111px;width:180px;height:150px;background:#000;overflow:hidden"><div style="left:0;top:15px;width:180px;height:1px;background:#0e2a0e"></div><div style="left:0;top:30px;width:180px;height:1px;background:#0e2a0e"></div><div style="left:0;top:45px;width:180px;height:1px;background:#0e2a0e"></div><div style="left:0;top:60px;width:180px;height:1px;background:#0e2a0e"></div><div style="left:0;top:90px;width:180px;height:1px;background:#0e2a0e"></div><div style="left:0;top:105px;width:180px;height:1px;background:#0e2a0e"></div><div style="left:0;top:120px;width:180px;height:1px;background:#0e2a0e"></div><div style="left:0;top:135px;width:180px;height:1px;background:#0e2a0e"></div><div style="left:88px;top:0;width:2px;height:150px;background:#6e5c48"></div><div style="left:0;top:74px;width:180px;height:2px;background:#84642e"></div><svg style="position:absolute;left:0;top:0" width="180" height="150"><polyline points="1,75 1,1 180,1 180,12" stroke="#e8e8e0" stroke-width="2" fill="none"/></svg><div class="t" style="right:6px;top:5px;color:#fff;text-align:right">1V</div><div class="t" style="right:6px;top:22px;color:#fff">0V</div></div>
<div style="left:833px;top:112px;width:49px;height:21px;background:#454545;border:1px solid #333;border-top-color:#2e2e2e;border-radius:2px;color:#a8a8a8;text-align:left;padding:0 3px;line-height:21px;white-space:nowrap;overflow:hidden;">VGTen1</div>
<div style="left:1109px;top:112px;width:49px;height:21px;background:#454545;border:1px solid #333;border-top-color:#2e2e2e;border-radius:2px;color:#a8a8a8;text-align:left;padding:0 3px;line-height:21px;white-space:nowrap;overflow:hidden;">VGTen2</div>
<div style="left:835px;top:164px;width:14px;height:14px;background:linear-gradient(#4a4a4a,#3c3c3c);border:1px solid #2f2f2f;border-radius:2px;box-shadow:inset 0 1px 0 #555"><svg width="14" height="14" viewBox="0 0 14 14" style="position:absolute;left:-1px;top:-1px"><path d="M2 7.5 L4.8 11.5 L12.8 1.2" stroke="#d8b070" stroke-width="1.3" fill="none"/><path d="M2.6 7.6 L4.8 11 L6.5 8.6" stroke="#d8a038" stroke-width="2.2" fill="none"/></svg></div>
<div class="t" style="left:853px;top:165px;color:#d0d0d0">On</div>
<div style="left:835px;top:184px;width:14px;height:14px;background:linear-gradient(#4a4a4a,#3c3c3c);border:1px solid #2f2f2f;border-radius:2px;box-shadow:inset 0 1px 0 #555"><svg width="14" height="14" viewBox="0 0 14 14" style="position:absolute;left:-1px;top:-1px"><path d="M2 7.5 L4.8 11.5 L12.8 1.2" stroke="#d8b070" stroke-width="1.3" fill="none"/><path d="M2.6 7.6 L4.8 11 L6.5 8.6" stroke="#d8a038" stroke-width="2.2" fill="none"/></svg></div>
<div class="t" style="left:853px;top:185px;color:#d0d0d0">Cycle infini</div>
<div style="left:1111px;top:164px;width:14px;height:14px;background:linear-gradient(#4a4a4a,#3c3c3c);border:1px solid #2f2f2f;border-radius:2px;box-shadow:inset 0 1px 0 #555"><svg width="14" height="14" viewBox="0 0 14 14" style="position:absolute;left:-1px;top:-1px"><path d="M2 7.5 L4.8 11.5 L12.8 1.2" stroke="#d8b070" stroke-width="1.3" fill="none"/><path d="M2.6 7.6 L4.8 11 L6.5 8.6" stroke="#d8a038" stroke-width="2.2" fill="none"/></svg></div>
<div class="t" style="left:1129px;top:165px;color:#d0d0d0">On</div>
<div style="left:1111px;top:184px;width:14px;height:14px;background:linear-gradient(#4a4a4a,#3c3c3c);border:1px solid #2f2f2f;border-radius:2px;box-shadow:inset 0 1px 0 #555"><svg width="14" height="14" viewBox="0 0 14 14" style="position:absolute;left:-1px;top:-1px"><path d="M2 7.5 L4.8 11.5 L12.8 1.2" stroke="#d8b070" stroke-width="1.3" fill="none"/><path d="M2.6 7.6 L4.8 11 L6.5 8.6" stroke="#d8a038" stroke-width="2.2" fill="none"/></svg></div>
<div class="t" style="left:1129px;top:185px;color:#d0d0d0">Cycle infini</div>
<div style="left:213px;top:270px;width:180px;height:150px;background:#000;overflow:hidden"><div style="left:0;top:15px;width:180px;height:1px;background:#0e2a0e"></div><div style="left:0;top:30px;width:180px;height:1px;background:#0e2a0e"></div><div style="left:0;top:45px;width:180px;height:1px;background:#0e2a0e"></div><div style="left:0;top:60px;width:180px;height:1px;background:#0e2a0e"></div><div style="left:0;top:90px;width:180px;height:1px;background:#0e2a0e"></div><div style="left:0;top:105px;width:180px;height:1px;background:#0e2a0e"></div><div style="left:0;top:120px;width:180px;height:1px;background:#0e2a0e"></div><div style="left:0;top:135px;width:180px;height:1px;background:#0e2a0e"></div><div style="left:88px;top:0;width:2px;height:150px;background:#6e5c48"></div><div style="left:0;top:74px;width:180px;height:2px;background:#84642e"></div><svg style="position:absolute;left:0;top:0" width="180" height="150"><polyline points="0,75 180,75" stroke="#f0ead8" stroke-width="2.5" fill="none"/></svg><div class="t" style="right:6px;top:5px;color:#fff;text-align:right">20nV</div><div class="t" style="right:6px;top:22px;color:#fff">0V</div></div>
<div style="left:397px;top:271px;width:52px;height:21px;background:#454545;border:1px solid #333;border-top-color:#2e2e2e;border-radius:2px;color:#a8a8a8;text-align:left;padding:0 3px;line-height:21px;white-space:nowrap;overflow:hidden;">XAop1</div><div style="left:397px;top:294px;width:52px;height:21px;background:#454545;border:1px solid #333;border-top-color:#2e2e2e;border-radius:2px;color:#a8a8a8;text-align:left;padding:0 3px;line-height:21px;white-space:nowrap;overflow:hidden;">EGain</div><div style="left:397px;top:317px;width:52px;height:21px;background:#3c3c3c;border:1px solid #333;border-top-color:#2e2e2e;border-radius:2px;color:#a8a8a8;text-align:left;padding:0 3px;line-height:21px;white-space:nowrap;overflow:hidden;">0</div><div style="left:398px;top:343px;width:14px;height:14px;background:linear-gradient(#4a4a4a,#3c3c3c);border:1px solid #2f2f2f;border-radius:2px;box-shadow:inset 0 1px 0 #555"></div><div class="t" style="left:418px;top:343px;color:#e0e0e0">+/-</div><div style="left:409px;top:365px;width:30px;height:30px;border-radius:50%;background:radial-gradient(circle at 50% 35%,#474747,#3b3b3b 60%,#363636);border:1px solid #2c2c2c;box-shadow:0 1px 0 #4c4c4c"><div style="left:21.0px;top:9.0px;width:4px;height:4px;border-radius:50%;background:#e8e8e8"></div></div><div style="left:397px;top:398px;width:55px;height:22px;background:linear-gradient(#4e4e4e,#3c3c3c);border:1px solid #2c2c2c;border-radius:3px;color:#e8e8e8;text-align:center;line-height:22px;white-space:nowrap;">Div</div>
<div style="left:459px;top:270px;width:180px;height:150px;background:#000;overflow:hidden"><div style="left:0;top:15px;width:180px;height:1px;background:#0e2a0e"></div><div style="left:0;top:30px;width:180px;height:1px;background:#0e2a0e"></div><div style="left:0;top:45px;width:180px;height:1px;background:#0e2a0e"></div><div style="left:0;top:60px;width:180px;height:1px;background:#0e2a0e"></div><div style="left:0;top:90px;width:180px;height:1px;background:#0e2a0e"></div><div style="left:0;top:105px;width:180px;height:1px;background:#0e2a0e"></div><div style="left:0;top:120px;width:180px;height:1px;background:#0e2a0e"></div><div style="left:0;top:135px;width:180px;height:1px;background:#0e2a0e"></div><div style="left:88px;top:0;width:2px;height:150px;background:#6e5c48"></div><div style="left:0;top:74px;width:180px;height:2px;background:#84642e"></div><svg style="position:absolute;left:0;top:0" width="180" height="150"><polyline points="0,75 1,110 178,110 179,106" stroke="#e8e8e0" stroke-width="2" fill="none"/></svg><div class="t" style="right:6px;top:5px;color:#fff;text-align:right">2V</div><div class="t" style="right:6px;top:22px;color:#fff">0V</div></div>
<div style="left:644px;top:271px;width:52px;height:21px;background:#454545;border:1px solid #333;border-top-color:#2e2e2e;border-radius:2px;color:#a8a8a8;text-align:left;padding:0 3px;line-height:21px;white-space:nowrap;overflow:hidden;">XAop1</div><div style="left:644px;top:294px;width:52px;height:21px;background:#454545;border:1px solid #333;border-top-color:#2e2e2e;border-radius:2px;color:#a8a8a8;text-align:left;padding:0 3px;line-height:21px;white-space:nowrap;overflow:hidden;">EGain3</div><div style="left:644px;top:317px;width:52px;height:21px;background:#3c3c3c;border:1px solid #333;border-top-color:#2e2e2e;border-radius:2px;color:#a8a8a8;text-align:left;padding:0 3px;line-height:21px;white-space:nowrap;overflow:hidden;">0</div><div style="left:645px;top:343px;width:14px;height:14px;background:linear-gradient(#4a4a4a,#3c3c3c);border:1px solid #2f2f2f;border-radius:2px;box-shadow:inset 0 1px 0 #555"></div><div class="t" style="left:665px;top:343px;color:#e0e0e0">+/-</div><div style="left:656px;top:365px;width:30px;height:30px;border-radius:50%;background:radial-gradient(circle at 50% 35%,#474747,#3b3b3b 60%,#363636);border:1px solid #2c2c2c;box-shadow:0 1px 0 #4c4c4c"><div style="left:13.0px;top:23.0px;width:4px;height:4px;border-radius:50%;background:#e8e8e8"></div></div><div style="left:644px;top:398px;width:55px;height:22px;background:linear-gradient(#4e4e4e,#3c3c3c);border:1px solid #2c2c2c;border-radius:3px;color:#e8e8e8;text-align:center;line-height:22px;white-space:nowrap;">Div</div>
<div style="left:705px;top:270px;width:180px;height:150px;background:#000;overflow:hidden"><div style="left:0;top:15px;width:180px;height:1px;background:#0e2a0e"></div><div style="left:0;top:30px;width:180px;height:1px;background:#0e2a0e"></div><div style="left:0;top:45px;width:180px;height:1px;background:#0e2a0e"></div><div style="left:0;top:60px;width:180px;height:1px;background:#0e2a0e"></div><div style="left:0;top:90px;width:180px;height:1px;background:#0e2a0e"></div><div style="left:0;top:105px;width:180px;height:1px;background:#0e2a0e"></div><div style="left:0;top:120px;width:180px;height:1px;background:#0e2a0e"></div><div style="left:0;top:135px;width:180px;height:1px;background:#0e2a0e"></div><div style="left:88px;top:0;width:2px;height:150px;background:#6e5c48"></div><div style="left:0;top:74px;width:180px;height:2px;background:#84642e"></div><svg style="position:absolute;left:0;top:0" width="180" height="150"><polyline points="0,75 1,149 180,149" stroke="#e8e8e0" stroke-width="2" fill="none"/></svg><div class="t" style="right:6px;top:5px;color:#fff;text-align:right">50V</div><div class="t" style="right:6px;top:22px;color:#fff">0V</div></div>
<div style="left:890px;top:271px;width:52px;height:21px;background:#454545;border:1px solid #333;border-top-color:#2e2e2e;border-radius:2px;color:#a8a8a8;text-align:left;padding:0 3px;line-height:21px;white-space:nowrap;overflow:hidden;">XAop1</div><div style="left:890px;top:294px;width:52px;height:21px;background:#454545;border:1px solid #333;border-top-color:#2e2e2e;border-radius:2px;color:#a8a8a8;text-align:left;padding:0 3px;line-height:21px;white-space:nowrap;overflow:hidden;">EGain4</div><div style="left:890px;top:317px;width:52px;height:21px;background:#3c3c3c;border:1px solid #333;border-top-color:#2e2e2e;border-radius:2px;color:#a8a8a8;text-align:left;padding:0 3px;line-height:21px;white-space:nowrap;overflow:hidden;">0</div><div style="left:891px;top:343px;width:14px;height:14px;background:linear-gradient(#4a4a4a,#3c3c3c);border:1px solid #2f2f2f;border-radius:2px;box-shadow:inset 0 1px 0 #555"></div><div class="t" style="left:911px;top:343px;color:#e0e0e0">+/-</div><div style="left:902px;top:365px;width:30px;height:30px;border-radius:50%;background:radial-gradient(circle at 50% 35%,#474747,#3b3b3b 60%,#363636);border:1px solid #2c2c2c;box-shadow:0 1px 0 #4c4c4c"><div style="left:23.0px;top:13.0px;width:4px;height:4px;border-radius:50%;background:#e8e8e8"></div></div><div style="left:890px;top:398px;width:55px;height:22px;background:linear-gradient(#4e4e4e,#3c3c3c);border:1px solid #2c2c2c;border-radius:3px;color:#e8e8e8;text-align:center;line-height:22px;white-space:nowrap;">Div</div>
<div style="left:951px;top:270px;width:180px;height:150px;background:#000;overflow:hidden"><div style="left:0;top:15px;width:180px;height:1px;background:#0e2a0e"></div><div style="left:0;top:30px;width:180px;height:1px;background:#0e2a0e"></div><div style="left:0;top:45px;width:180px;height:1px;background:#0e2a0e"></div><div style="left:0;top:60px;width:180px;height:1px;background:#0e2a0e"></div><div style="left:0;top:90px;width:180px;height:1px;background:#0e2a0e"></div><div style="left:0;top:105px;width:180px;height:1px;background:#0e2a0e"></div><div style="left:0;top:120px;width:180px;height:1px;background:#0e2a0e"></div><div style="left:0;top:135px;width:180px;height:1px;background:#0e2a0e"></div><div style="left:88px;top:0;width:2px;height:150px;background:#6e5c48"></div><div style="left:0;top:74px;width:180px;height:2px;background:#84642e"></div><svg style="position:absolute;left:0;top:0" width="180" height="150"><polyline points="0,75 1,52 180,52" stroke="#e8e8e0" stroke-width="2" fill="none"/></svg><div class="t" style="right:6px;top:5px;color:#fff;text-align:right">10mV</div><div class="t" style="right:6px;top:22px;color:#fff">0V</div></div>
<div style="left:1136px;top:271px;width:52px;height:21px;background:#454545;border:1px solid #333;border-top-color:#2e2e2e;border-radius:2px;color:#a8a8a8;text-align:left;padding:0 3px;line-height:21px;white-space:nowrap;overflow:hidden;">XAop1</div><div style="left:1136px;top:294px;width:52px;height:21px;background:#454545;border:1px solid #333;border-top-color:#2e2e2e;border-radius:2px;color:#a8a8a8;text-align:left;padding:0 3px;line-height:21px;white-space:nowrap;overflow:hidden;">HVadj</div><div style="left:1136px;top:317px;width:52px;height:21px;background:#3c3c3c;border:1px solid #333;border-top-color:#2e2e2e;border-radius:2px;color:#a8a8a8;text-align:left;padding:0 3px;line-height:21px;white-space:nowrap;overflow:hidden;">0</div><div style="left:1137px;top:343px;width:14px;height:14px;background:linear-gradient(#4a4a4a,#3c3c3c);border:1px solid #2f2f2f;border-radius:2px;box-shadow:inset 0 1px 0 #555"></div><div class="t" style="left:1157px;top:343px;color:#e0e0e0">+/-</div><div style="left:1148px;top:365px;width:30px;height:30px;border-radius:50%;background:radial-gradient(circle at 50% 35%,#474747,#3b3b3b 60%,#363636);border:1px solid #2c2c2c;box-shadow:0 1px 0 #4c4c4c"><div style="left:15.0px;top:3.0px;width:4px;height:4px;border-radius:50%;background:#e8e8e8"></div></div><div style="left:1136px;top:398px;width:55px;height:22px;background:linear-gradient(#4e4e4e,#3c3c3c);border:1px solid #2c2c2c;border-radius:3px;color:#e8e8e8;text-align:center;line-height:22px;white-space:nowrap;">Div</div>
<div style="left:213px;top:431px;width:180px;height:150px;background:#000;overflow:hidden"><div style="left:0;top:15px;width:180px;height:1px;background:#0e2a0e"></div><div style="left:0;top:30px;width:180px;height:1px;background:#0e2a0e"></div><div style="left:0;top:45px;width:180px;height:1px;background:#0e2a0e"></div><div style="left:0;top:60px;width:180px;height:1px;background:#0e2a0e"></div><div style="left:0;top:90px;width:180px;height:1px;background:#0e2a0e"></div><div style="left:0;top:105px;width:180px;height:1px;background:#0e2a0e"></div><div style="left:0;top:120px;width:180px;height:1px;background:#0e2a0e"></div><div style="left:0;top:135px;width:180px;height:1px;background:#0e2a0e"></div><div style="left:88px;top:0;width:2px;height:150px;background:#6e5c48"></div><div style="left:0;top:74px;width:180px;height:2px;background:#84642e"></div><svg style="position:absolute;left:0;top:0" width="180" height="150"><polyline points="0,75 1,115 179,115 180,108" stroke="#e8e8e0" stroke-width="2" fill="none"/></svg><div class="t" style="right:6px;top:5px;color:#fff;text-align:right">2V</div><div class="t" style="right:6px;top:22px;color:#fff">0V</div></div>
<div style="left:397px;top:432px;width:52px;height:21px;background:#454545;border:1px solid #333;border-top-color:#2e2e2e;border-radius:2px;color:#a8a8a8;text-align:left;padding:0 3px;line-height:21px;white-space:nowrap;overflow:hidden;">ROscv1</div><div style="left:397px;top:478px;width:52px;height:21px;background:#3c3c3c;border:1px solid #333;border-top-color:#2e2e2e;border-radius:2px;color:#a8a8a8;text-align:left;padding:0 3px;line-height:21px;white-space:nowrap;overflow:hidden;">0</div><div style="left:398px;top:504px;width:14px;height:14px;background:linear-gradient(#4a4a4a,#3c3c3c);border:1px solid #2f2f2f;border-radius:2px;box-shadow:inset 0 1px 0 #555"></div><div class="t" style="left:418px;top:504px;color:#e0e0e0">+/-</div><div style="left:409px;top:526px;width:30px;height:30px;border-radius:50%;background:radial-gradient(circle at 50% 35%,#474747,#3b3b3b 60%,#363636);border:1px solid #2c2c2c;box-shadow:0 1px 0 #4c4c4c"><div style="left:13.0px;top:23.0px;width:4px;height:4px;border-radius:50%;background:#e8e8e8"></div></div><div style="left:397px;top:559px;width:55px;height:22px;background:linear-gradient(#4e4e4e,#3c3c3c);border:1px solid #2c2c2c;border-radius:3px;color:#e8e8e8;text-align:center;line-height:22px;white-space:nowrap;">Div</div>
<div style="left:210px;top:638px;width:1028px;height:382px;background:#fff;overflow:hidden"></div>
<svg style="position:absolute;left:210px;top:638px" width="1028" height="382" viewBox="210 638 1028 382">
<g fill="none" stroke-width="2">
<path d="M480 1020 V1018 H505 V1020" stroke="#3c1a5c"/>
<path d="M642 989 V983 H802 V990" stroke="#3c1a5c"/>
<path d="M834 1020 V1018 H857 V1020" stroke="#3c1a5c"/>
<path d="M1106 950 H1111 V920 H1186 V926" stroke="#3c1a5c"/>
<path d="M1042 950 L1032 957 V1020" stroke="#3c1a5c"/>
<path d="M1106 966 H1122 V1020" stroke="#3c1a5c"/>
<path d="M1111 966 V974 H1116 V996 H1068 V1020" stroke="#3c1a5c"/>
<path d="M1186 958 V1020" stroke="#3c1a5c"/>
<rect x="1042" y="926" width="64" height="64" stroke="#000"/>
<path d="M1066 926 a8 7 0 0 0 16 0" stroke="#000"/>
<rect x="634" y="989" width="17" height="40" stroke="#000"/>
<path d="M802 997 L810 1011 M802 1014 V1020" stroke="#000"/>
<path d="M920 996 H940 M1175 934 H1197" stroke="#000"/>
<path d="M918 993 h6 M921 990 v6 M1175 931 h6 M1178 928 v6" stroke="#000" stroke-width="1.5"/>
<path d="M919 1017 h5 M1176 953 h5" stroke="#000" stroke-width="1.5"/>
</g>
<rect x="922" y="1004" width="18" height="6" fill="#000"/>
<rect x="1177" y="943" width="18" height="6" fill="#000"/>
<circle cx="1054" cy="934" r="4" fill="#000"/>
<g fill="#fff" stroke="#000" stroke-width="2"><circle cx="1042" cy="934" r="3.5"/><circle cx="1106" cy="934" r="3.5"/><circle cx="1106" cy="982" r="3.5"/></g>
<g fill="#e80000">
<rect x="638" y="985" width="8" height="8"/><rect x="638" y="1016" width="8" height="8"/>
<rect x="798" y="986" width="8" height="8"/><rect x="798" y="1016" width="8" height="8"/>
<rect x="830" y="1016" width="8" height="8"/>
<rect x="926" y="985" width="8" height="8"/><rect x="926" y="1016" width="8" height="8"/>
<rect x="1038" y="946" width="8" height="8"/><rect x="1038" y="962" width="8" height="8"/><rect x="1038" y="978" width="8" height="8"/>
<rect x="1102" y="946" width="8" height="8"/><rect x="1102" y="962" width="8" height="8"/>
<rect x="1182" y="922" width="8" height="8"/><rect x="1182" y="954" width="8" height="8"/>
</g>
<g font-family="Liberation Sans" font-size="10" fill="#000">
<text x="660" y="1003" font-weight="bold" letter-spacing="0.4">RStd1</text><text x="660" y="1020" font-style="italic">1kΩ</text>
<text x="819" y="1003" font-weight="bold" letter-spacing="0.4">RStd3</text><text x="819" y="1020" font-style="italic">true</text>
<text x="948" y="1003" font-weight="bold">VStd16</text><text x="948" y="1020" font-style="italic">-22V</text>
<text x="1113" y="939" font-weight="bold">Aop1</text><text x="1109" y="956" font-style="italic">LM741</text>
<text x="1203" y="939" font-weight="bold">VStd15</text><text x="1203" y="956" font-style="italic">22V</text>
</g></svg>
<div style="left:1238px;top:638px;width:18px;height:382px;background:linear-gradient(90deg,#3a3a3a,#555 50%,#3c3c3c);border-left:1px solid #333;border-right:1px solid #333"></div><svg style="position:absolute;left:1242.0px;top:643px" width="10" height="8"><path d="M0 8 L5 0 L10 8z" fill="#000"/></svg><svg style="position:absolute;left:1242.0px;top:1007px" width="10" height="8"><path d="M0 0 L5 8 L10 0z" fill="#000"/></svg><div style="left:1241.0px;top:659px;width:12px;height:12px;border-radius:50%;background:radial-gradient(circle at 40% 35%,#f0c850,#c09020 60%,#8a6a10)"></div>
<div style="left:210px;top:1020px;width:1047px;height:11px;background:linear-gradient(#3a3a3a,#4a4a4a 40%,#2e2e2e)"></div>
<svg style="position:absolute;left:226px;top:1021px" width="8" height="6"><path d="M0 6 L8 0 V6z" fill="#000"/></svg>
<div style="left:230px;top:1021px;width:14px;height:8px;border-radius:7px 7px 0 0;background:#d8a830"></div>
<div style="left:1256px;top:108px;width:17px;height:923px;background:linear-gradient(90deg,#3a3a3a,#555 50%,#3c3c3c);border-left:1px solid #333;border-right:1px solid #333"></div><svg style="position:absolute;left:1259.5px;top:113px" width="10" height="8"><path d="M0 8 L5 0 L10 8z" fill="#000"/></svg><svg style="position:absolute;left:1259.5px;top:1018px" width="10" height="8"><path d="M0 0 L5 8 L10 0z" fill="#000"/></svg><div style="left:1258.5px;top:128px;width:12px;height:12px;border-radius:50%;background:radial-gradient(circle at 40% 35%,#f0c850,#c09020 60%,#8a6a10)"></div>
<div style="left:1273px;top:108px;width:240px;height:921px;background:#424242"></div>
<div style="left:1276px;top:115px;width:234px;height:637px;border:1px solid #303030;border-radius:4px;background:#424242"></div>
<div style="left:1291px;top:108px;width:56px;height:12px;background:#424242"></div>
<div style="left:1292px;top:109px;width:14px;height:14px;background:linear-gradient(#4a4a4a,#3c3c3c);border:1px solid #2f2f2f;border-radius:2px;box-shadow:inset 0 1px 0 #555"></div>
<div class="t" style="left:1311px;top:111px;color:#f0f0f0;font-size:12.5px">On</div>
<div style="left:1401px;top:137px;width:14px;height:14px;background:linear-gradient(#4a4a4a,#3c3c3c);border:1px solid #2f2f2f;border-radius:2px;box-shadow:inset 0 1px 0 #555"><svg width="14" height="14" viewBox="0 0 14 14" style="position:absolute;left:-1px;top:-1px"><path d="M2 7.5 L4.8 11.5 L12.8 1.2" stroke="#d8b070" stroke-width="1.3" fill="none"/><path d="M2.6 7.6 L4.8 11 L6.5 8.6" stroke="#d8a038" stroke-width="2.2" fill="none"/></svg></div>
<div class="t" style="left:1420px;top:138px;color:#c8c8c8">RStd3</div>
<div style="left:1400px;top:154px;width:30px;height:30px;border-radius:50%;background:radial-gradient(circle at 50% 35%,#474747,#3b3b3b 60%,#363636);border:1px solid #2c2c2c;box-shadow:0 1px 0 #4c4c4c"><div style="left:3.0px;top:13.0px;width:4px;height:4px;border-radius:50%;background:#b8b8b8"></div></div>
<div class="t" style="left:1432px;top:154px;color:#b8b8b8">VGTen1</div>
<div class="t" style="left:1432px;top:170px;color:#b8b8b8">5.05 Hz</div>
<div style="left:1400px;top:187px;width:30px;height:30px;border-radius:50%;background:radial-gradient(circle at 50% 35%,#474747,#3b3b3b 60%,#363636);border:1px solid #2c2c2c;box-shadow:0 1px 0 #4c4c4c"><div style="left:3.0px;top:13.0px;width:4px;height:4px;border-radius:50%;background:#b8b8b8"></div></div>
<div class="t" style="left:1432px;top:187px;color:#b8b8b8">VGTen2</div>
<div class="t" style="left:1432px;top:203px;color:#b8b8b8">5.05 Hz</div>
<div style="left:1400px;top:220px;width:30px;height:30px;border-radius:50%;background:radial-gradient(circle at 50% 35%,#474747,#3b3b3b 60%,#363636);border:1px solid #2c2c2c;box-shadow:0 1px 0 #4c4c4c"><div style="left:23.0px;top:13.0px;width:4px;height:4px;border-radius:50%;background:#b8b8b8"></div></div>
<div class="t" style="left:1432px;top:220px;color:#b8b8b8">XAop1</div>
<div class="t" style="left:1432px;top:236px;color:#b8b8b8">970µ V</div>
<div style="left:1400px;top:253px;width:30px;height:30px;border-radius:50%;background:radial-gradient(circle at 50% 35%,#474747,#3b3b3b 60%,#363636);border:1px solid #2c2c2c;box-shadow:0 1px 0 #4c4c4c"><div style="left:23.0px;top:13.0px;width:4px;height:4px;border-radius:50%;background:#b8b8b8"></div></div>
<div class="t" style="left:1432px;top:253px;color:#b8b8b8">XAop1</div>
<div class="t" style="left:1432px;top:269px;color:#b8b8b8">80n A</div>
<div style="left:1400px;top:286px;width:30px;height:30px;border-radius:50%;background:radial-gradient(circle at 50% 35%,#474747,#3b3b3b 60%,#363636);border:1px solid #2c2c2c;box-shadow:0 1px 0 #4c4c4c"><div style="left:23.0px;top:13.0px;width:4px;height:4px;border-radius:50%;background:#b8b8b8"></div></div>
<div class="t" style="left:1432px;top:286px;color:#b8b8b8">XAop1</div>
<div class="t" style="left:1432px;top:302px;color:#b8b8b8">80n A</div>
<div style="left:1400px;top:319px;width:30px;height:30px;border-radius:50%;background:radial-gradient(circle at 50% 35%,#474747,#3b3b3b 60%,#363636);border:1px solid #2c2c2c;box-shadow:0 1px 0 #4c4c4c"><div style="left:23.0px;top:13.0px;width:4px;height:4px;border-radius:50%;background:#b8b8b8"></div></div>
<div class="t" style="left:1432px;top:319px;color:#b8b8b8">VStd15</div>
<div class="t" style="left:1432px;top:335px;color:#b8b8b8">22 V</div>
<div style="left:1400px;top:352px;width:30px;height:30px;border-radius:50%;background:radial-gradient(circle at 50% 35%,#474747,#3b3b3b 60%,#363636);border:1px solid #2c2c2c;box-shadow:0 1px 0 #4c4c4c"><div style="left:23.0px;top:13.0px;width:4px;height:4px;border-radius:50%;background:#b8b8b8"></div></div>
<div class="t" style="left:1432px;top:352px;color:#b8b8b8">VStd16</div>
<div class="t" style="left:1432px;top:368px;color:#b8b8b8">-22 V</div>
<div class="t" style="left:1286px;top:765px;color:#e0e0e0">Température ambiante</div>
<div style="left:1416px;top:761px;width:48px;height:21px;background:#363636;border:1px solid #333;border-top-color:#2e2e2e;border-radius:2px;color:#e0e0e0;text-align:right;padding:0 3px;line-height:21px;white-space:nowrap;overflow:hidden;">25</div>
<div class="t" style="left:1474px;top:766px;color:#e0e0e0">°C</div>
<div class="t" style="left:1287px;top:790px;color:#e0e0e0">Irradiation d'intensité</div>
<div style="left:1415px;top:786px;width:48px;height:21px;background:#363636;border:1px solid #333;border-top-color:#2e2e2e;border-radius:2px;color:#e0e0e0;text-align:right;padding:0 3px;line-height:21px;white-space:nowrap;overflow:hidden;">1k</div>
<div class="t" style="left:1473px;top:791px;color:#e0e0e0">W/m²</div>
<div class="t" style="left:1286px;top:814px;color:#e0e0e0">λ</div>
<div style="left:1415px;top:810px;width:48px;height:21px;background:#363636;border:1px solid #333;border-top-color:#2e2e2e;border-radius:2px;color:#e0e0e0;text-align:right;padding:0 3px;line-height:21px;white-space:nowrap;overflow:hidden;">550n</div>
<div class="t" style="left:1474px;top:815px;color:#e0e0e0">m</div>
<div class="t" style="left:1286px;top:839px;color:#e0e0e0">Création le</div>
<div style="left:1375px;top:836px;width:128px;height:21px;background:#404040;border:1px solid #333;border-top-color:#2e2e2e;border-radius:2px;color:#9a9a9a;text-align:left;padding:0 3px;line-height:21px;white-space:nowrap;overflow:hidden;border-color:#4a4a4a">02/09/2023 05:47:32</div>
<div class="t" style="left:1286px;top:867px;color:#e0e0e0">Annotation</div>
<div style="left:1373px;top:863px;width:129px;height:21px;background:#363636;border:1px solid #333;border-top-color:#2e2e2e;border-radius:2px;color:#e8e8e8;text-align:left;padding:0 3px;line-height:21px;white-space:nowrap;overflow:hidden;">No found</div>
<div class="t" style="left:1286px;top:891px;color:#e0e0e0">Informations</div>
<div style="left:1286px;top:907px;width:216px;height:122px;background:#363636;border:1px solid #303030;border-radius:2px"></div>
<div class="t" style="left:1288px;top:911px;color:#e8e8e8">Temporal:</div>
<div class="t" style="left:1288px;top:927px;color:#e8e8e8">Define time at 1s and Oscv1 on 2V.</div>
<div class="t" style="left:1288px;top:943px;color:#e8e8e8">Click on symbol calculate for run.</div>
<div style="left:1513px;top:53px;width:197px;height:976px;background:#474747;border:1px solid #3a3a3a;border-radius:3px"></div>
<svg style="position:absolute;left:1521px;top:60px" width="7" height="10"><path d="M0 0 L7 5 L0 10z" fill="#000"/></svg>
<div class="t" style="left:1534px;top:58px;color:#ececec">Analyseur spectre</div>
<svg style="position:absolute;left:1521px;top:80px" width="7" height="10"><path d="M0 0 L7 5 L0 10z" fill="#000"/></svg>
<div class="t" style="left:1534px;top:78px;color:#ececec">capometer</div>
<svg style="position:absolute;left:1521px;top:100px" width="7" height="10"><path d="M0 0 L7 5 L0 10z" fill="#000"/></svg>
<div class="t" style="left:1534px;top:98px;color:#ececec">Cmos</div>
<svg style="position:absolute;left:1521px;top:120px" width="7" height="10"><path d="M0 0 L7 5 L0 10z" fill="#000"/></svg>
<div class="t" style="left:1534px;top:118px;color:#ececec">Commutators</div>
<svg style="position:absolute;left:1521px;top:140px" width="7" height="10"><path d="M0 0 L7 5 L0 10z" fill="#000"/></svg>
<div class="t" style="left:1534px;top:138px;color:#ececec">Digital</div>
<svg style="position:absolute;left:1521px;top:160px" width="7" height="10"><path d="M0 0 L7 5 L0 10z" fill="#000"/></svg>
<div class="t" style="left:1534px;top:158px;color:#ececec">Display</div>
<svg style="position:absolute;left:1521px;top:180px" width="7" height="10"><path d="M0 0 L7 5 L0 10z" fill="#000"/></svg>
<div class="t" style="left:1534px;top:178px;color:#ececec">Divi. tension pour Osci./10</div>
<svg style="position:absolute;left:1521px;top:200px" width="7" height="10"><path d="M0 0 L7 5 L0 10z" fill="#000"/></svg>
<div class="t" style="left:1534px;top:198px;color:#ececec">Inductances</div>
<svg style="position:absolute;left:1521px;top:220px" width="7" height="10"><path d="M0 0 L7 5 L0 10z" fill="#000"/></svg>
<div class="t" style="left:1534px;top:218px;color:#ececec">LM741</div>
<svg style="position:absolute;left:1521px;top:240px" width="7" height="10"><path d="M0 0 L7 5 L0 10z" fill="#000"/></svg>
<div class="t" style="left:1534px;top:238px;color:#ececec">LM741NS</div>
<svg style="position:absolute;left:1521px;top:260px" width="7" height="10"><path d="M0 0 L7 5 L0 10z" fill="#000"/></svg>
<div class="t" style="left:1534px;top:258px;color:#ececec">LM741NS</div>
<svg style="position:absolute;left:1521px;top:280px" width="7" height="10"><path d="M0 0 L7 5 L0 10z" fill="#000"/></svg>
<div class="t" style="left:1534px;top:278px;color:#ececec">LTSpice-TextExample</div>
<svg style="position:absolute;left:1521px;top:300px" width="7" height="10"><path d="M0 0 L7 5 L0 10z" fill="#000"/></svg>
<div class="t" style="left:1534px;top:298px;color:#ececec">Mesure de courant</div>
<svg style="position:absolute;left:1521px;top:320px" width="7" height="10"><path d="M0 0 L7 5 L0 10z" fill="#000"/></svg>
<div class="t" style="left:1534px;top:318px;color:#ececec">Mesures</div>
<svg style="position:absolute;left:1521px;top:340px" width="7" height="10"><path d="M0 0 L7 5 L0 10z" fill="#000"/></svg>
<div class="t" style="left:1534px;top:338px;color:#ececec">Oscilloscope</div>
<svg style="position:absolute;left:1521px;top:360px" width="7" height="10"><path d="M0 0 L7 5 L0 10z" fill="#000"/></svg>
<div class="t" style="left:1534px;top:358px;color:#ececec">Potentiometers</div>
<svg style="position:absolute;left:1521px;top:380px" width="7" height="10"><path d="M0 0 L7 5 L0 10z" fill="#000"/></svg>
<div class="t" style="left:1534px;top:378px;color:#ececec">Quartz</div>
<svg style="position:absolute;left:1521px;top:400px" width="7" height="10"><path d="M0 0 L7 5 L0 10z" fill="#000"/></svg>
<div class="t" style="left:1534px;top:398px;color:#ececec">REC2POL</div>
<svg style="position:absolute;left:1521px;top:420px" width="7" height="10"><path d="M0 0 L7 5 L0 10z" fill="#000"/></svg>
<div class="t" style="left:1534px;top:418px;color:#ececec">Relay</div>
<svg style="position:absolute;left:1521px;top:440px" width="7" height="10"><path d="M0 0 L7 5 L0 10z" fill="#000"/></svg>
<div class="t" style="left:1534px;top:438px;color:#ececec">SCR1</div>
<svg style="position:absolute;left:1521px;top:460px" width="7" height="10"><path d="M0 0 L7 5 L0 10z" fill="#000"/></svg>
<div class="t" style="left:1534px;top:458px;color:#ececec">Source de courant</div>
<svg style="position:absolute;left:1521px;top:480px" width="7" height="10"><path d="M0 0 L7 5 L0 10z" fill="#000"/></svg>
<div class="t" style="left:1534px;top:478px;color:#ececec">Source de Tension</div>
<svg style="position:absolute;left:1521px;top:500px" width="9" height="9"><path d="M9 0 V9 H0z" fill="#000"/></svg>
<div class="t" style="left:1534px;top:498px;color:#ececec">Standards</div>
<div style="left:1534px;top:675px;width:158px;height:20px;background:#8e6a40;border-radius:3px"></div>
<svg style="position:absolute;left:1556px;top:517px" width="16" height="16"><rect width="16" height="16" fill="#fff"/><path d="M8 1 v6 M2 7 h12" stroke="#000" stroke-width="1.2"/><path d="M2 12 l3 -4 M5 12 l3 -4 M8 12 l3 -4 M11 12 l3 -4" stroke="#000" stroke-width="0.8"/></svg>
<div class="t" style="left:1574px;top:518px;color:#ececec">Masse</div>
<svg style="position:absolute;left:1556px;top:537px" width="16" height="16"><rect width="16" height="16" fill="#fff"/><ellipse cx="8" cy="8" rx="3.6" ry="5.5" fill="none" stroke="#000" stroke-width="1.5"/><path d="M5.5 6.5 h5 M5.5 9.5 h5" stroke="#000" stroke-width="1.2"/><path d="M8 4 v8" stroke="#000" stroke-width="0.8"/></svg>
<div class="t" style="left:1574px;top:538px;color:#ececec">Courant->Courant</div>
<svg style="position:absolute;left:1556px;top:557px" width="16" height="16"><rect width="16" height="16" fill="#fff"/><rect x="5.5" y="1.5" width="5" height="13" fill="none" stroke="#000" stroke-width="1.2"/></svg>
<div class="t" style="left:1574px;top:558px;color:#ececec">Résistance</div>
<svg style="position:absolute;left:1556px;top:577px" width="16" height="16"><rect width="16" height="16" fill="#fff"/><rect x="5" y="1" width="6" height="14" fill="none" stroke="#000"/><path d="M5 4 h6 M5 7 h6 M5 10 h6 M5 13 h6" stroke="#000"/></svg>
<div class="t" style="left:1574px;top:578px;color:#ececec">Inductance</div>
<svg style="position:absolute;left:1556px;top:597px" width="16" height="16"><rect width="16" height="16" fill="#fff"/><path d="M8 1 v2 M2 3 h12 l-6 6z M2 9 h12 M8 9 v6" stroke="#000" fill="none" stroke-width="1.1"/></svg>
<div class="t" style="left:1574px;top:598px;color:#ececec">Diode</div>
<svg style="position:absolute;left:1556px;top:617px" width="16" height="16"><rect width="16" height="16" fill="#fff"/><circle cx="8" cy="8" r="5" fill="none" stroke="#000" stroke-width="1.3"/><path d="M5.5 5 l2.5 3 l2.5 -3 M8 8 v5" stroke="#000" stroke-width="1.1" fill="none"/></svg>
<div class="t" style="left:1574px;top:618px;color:#ececec">Tension->Courant</div>
<svg style="position:absolute;left:1556px;top:637px" width="16" height="16"><rect width="16" height="16" fill="#fff"/><circle cx="7.5" cy="9" r="4.8" fill="none" stroke="#000" stroke-width="1.3"/><path d="M5.5 7.5 q2 3 4 0" stroke="#000" fill="none"/><path d="M12 1 v4 M10 3 h4" stroke="#000"/></svg>
<div class="t" style="left:1574px;top:638px;color:#ececec">Tension->Tension</div>
<svg style="position:absolute;left:1556px;top:657px" width="16" height="16"><rect width="16" height="16" fill="#fff"/><ellipse cx="7" cy="9" rx="3.8" ry="5" fill="none" stroke="#000" stroke-width="1.3"/><path d="M4 8 h6 M4 10.5 h6" stroke="#000"/><path d="M12 1 v4 M10 3 h4" stroke="#000"/></svg>
<div class="t" style="left:1574px;top:658px;color:#ececec">Courant->Tension</div>
<svg style="position:absolute;left:1556px;top:677px" width="16" height="16"><rect width="16" height="16" fill="#fff"/><path d="M8 1 v5 M3 6 h10 M5 9 h6 M8 9 v6 M2 4 h3 M3.5 2.5 v3 M2 12 h3" stroke="#000" stroke-width="1.2"/></svg>
<div class="t" style="left:1574px;top:678px;color:#ececec">Tension fixe</div>
<svg style="position:absolute;left:1556px;top:697px" width="16" height="16"><rect width="16" height="16" fill="#fff"/><ellipse cx="8" cy="8" rx="3.6" ry="5.5" fill="none" stroke="#000" stroke-width="1.5"/><path d="M5.5 6.5 h5 M5.5 9.5 h5" stroke="#000" stroke-width="1.2"/><path d="M8 4 v8" stroke="#000" stroke-width="0.8"/></svg>
<div class="t" style="left:1574px;top:698px;color:#ececec">Courant fixe</div>
<svg style="position:absolute;left:1556px;top:717px" width="16" height="16"><rect width="16" height="16" fill="#fff"/><path d="M8 1 v5 M3 6 h10 M3 10 h10 M8 10 v5" stroke="#000" stroke-width="1.8"/></svg>
<div class="t" style="left:1574px;top:718px;color:#ececec">Capacité</div>
<svg style="position:absolute;left:1556px;top:737px" width="16" height="16"><rect width="16" height="16" fill="#fff"/><path d="M8 1 v14" stroke="#000" stroke-width="1.2"/></svg>
<div class="t" style="left:1574px;top:738px;color:#ececec">Interrupteur</div>
<svg style="position:absolute;left:1556px;top:757px" width="16" height="16"><rect width="16" height="16" fill="#fff"/><path d="M8 1 v5 M3 6 h10 M3 10 h10 M8 10 v5" stroke="#000" stroke-width="1.8"/><path d="M3 8 h10" stroke="#c00" stroke-width="1"/></svg>
<div class="t" style="left:1574px;top:758px;color:#ececec">Capacité P-N</div>
<svg style="position:absolute;left:1556px;top:777px" width="16" height="16"><rect width="16" height="16" fill="#fff"/><path d="M8 1 v5 M3 6 h10 M5 9 h6 M8 9 v6" stroke="#000" stroke-width="1.2"/></svg>
<div class="t" style="left:1574px;top:778px;color:#ececec">Tension variable</div>
<svg style="position:absolute;left:1556px;top:797px" width="16" height="16"><rect width="16" height="16" fill="#fff"/><path d="M8 1 v4 M3 5 h10 M5 7 h6 M3 9 h10 M5 11 h6 M8 11 v4" stroke="#000" stroke-width="1.2"/></svg>
<div class="t" style="left:1574px;top:798px;color:#ececec">Accumulateur</div>
<svg style="position:absolute;left:1556px;top:817px" width="16" height="16"><rect width="16" height="16" fill="#fff"/><rect x="2" y="1" width="12" height="14" fill="#fff" stroke="#000"/></svg>
<div class="t" style="left:1574px;top:818px;color:#ececec">Digital</div>
<svg style="position:absolute;left:1556px;top:837px" width="16" height="16"><rect y="3" width="16" height="10" fill="#fff"/><rect x="1.5" y="6" width="3" height="3" fill="none" stroke="#333"/><path d="M5 7.5 h4 M11 5 v5 M13 6 l2 3" stroke="#555" stroke-dasharray="1 1"/></svg>
<div class="t" style="left:1574px;top:838px;color:#ececec">Relais T</div>
<svg style="position:absolute;left:1556px;top:857px" width="16" height="16"><rect width="16" height="16" fill="#fff"/><path d="M3 4 h10 l-5 6z M3 10 h10" stroke="#000" fill="none"/><path d="M11 3 l3 -2 M12 6 l3 -2" stroke="#000"/></svg>
<div class="t" style="left:1574px;top:858px;color:#ececec">DEL</div>
<svg style="position:absolute;left:1556px;top:877px" width="16" height="16"><rect width="16" height="16" fill="#fff"/><path d="M2 2 h12 l-6 6z M2 9 h12 M2 12 h12" stroke="#000" fill="none"/></svg>
<div class="t" style="left:1574px;top:878px;color:#ececec">Diode Varicap</div>
<svg style="position:absolute;left:1556px;top:897px" width="16" height="16"><rect width="16" height="16" fill="#fff"/><rect x="5" y="2" width="6" height="12" fill="none" stroke="#000"/><path d="M2 13 l12 -10" stroke="#000"/></svg>
<div class="t" style="left:1574px;top:898px;color:#ececec">Thermistance</div>
<svg style="position:absolute;left:1556px;top:917px" width="16" height="16"><rect width="16" height="16" fill="#fff"/><rect x="5" y="2" width="6" height="12" fill="none" stroke="#000"/><path d="M2 13 l12 -10" stroke="#000"/></svg>
<div class="t" style="left:1574px;top:918px;color:#ececec">Varistance</div>
<svg style="position:absolute;left:1556px;top:937px" width="16" height="16"><rect y="3" width="16" height="10" fill="#fff"/><rect x="1.5" y="6" width="3" height="3" fill="none" stroke="#333"/><path d="M5 7.5 h4 M11 5 v5 M13 6 l2 3" stroke="#555" stroke-dasharray="1 1"/></svg>
<div class="t" style="left:1574px;top:938px;color:#ececec">Courant inverseur</div>
<svg style="position:absolute;left:1556px;top:957px" width="16" height="16"><rect width="16" height="16" fill="#fff"/><circle cx="8" cy="8" r="6.5" fill="none" stroke="#000" stroke-width="1.5"/><path d="M8 2 v12 M3 8 h10" stroke="#000"/></svg>
<div class="t" style="left:1574px;top:958px;color:#ececec">IGBT</div>
<svg style="position:absolute;left:1556px;top:977px" width="16" height="16"><rect width="16" height="16" fill="#fff"/><ellipse cx="8" cy="8" rx="3.6" ry="5.5" fill="none" stroke="#000" stroke-width="1.5"/><path d="M5.5 6.5 h5 M5.5 9.5 h5" stroke="#000" stroke-width="1.2"/><path d="M8 4 v8" stroke="#000" stroke-width="0.8"/></svg>
<div class="t" style="left:1574px;top:978px;color:#ececec">Courant->Courant</div>
<svg style="position:absolute;left:1556px;top:997px" width="16" height="16"><rect width="16" height="16" fill="#fff"/><circle cx="8" cy="8" r="5" fill="none" stroke="#000" stroke-width="1.3"/><path d="M5.5 5 l2.5 3 l2.5 -3 M8 8 v5" stroke="#000" stroke-width="1.1" fill="none"/></svg>
<div class="t" style="left:1574px;top:998px;color:#ececec">Tension->Courant</div>
<svg style="position:absolute;left:1556px;top:1017px" width="16" height="16"><rect width="16" height="16" fill="#fff"/><ellipse cx="8" cy="8" rx="3.6" ry="5.5" fill="none" stroke="#000" stroke-width="1.5"/><path d="M5.5 6.5 h5 M5.5 9.5 h5" stroke="#000" stroke-width="1.2"/><path d="M8 4 v8" stroke="#000" stroke-width="0.8"/></svg>
<div class="t" style="left:1574px;top:1018px;color:#ececec">Courant variable</div>
<div style="left:1693px;top:53px;width:17px;height:976px;background:linear-gradient(90deg,#3a3a3a,#555 50%,#3c3c3c);border-left:1px solid #333;border-right:1px solid #333"></div><svg style="position:absolute;left:1696.5px;top:58px" width="10" height="8"><path d="M0 8 L5 0 L10 8z" fill="#000"/></svg><svg style="position:absolute;left:1696.5px;top:1016px" width="10" height="8"><path d="M0 0 L5 8 L10 0z" fill="#000"/></svg><div style="left:1696px;top:75px;width:11px;height:722px;background:linear-gradient(90deg,#9a7418,#e0b040 40%,#c89828 70%,#8a6a18);border-radius:6px"></div>
<div style="left:1711px;top:53px;width:201px;height:976px;background:#474747"></div>
<div style="left:1715px;top:61px;width:194px;height:66px;border:1px solid #333;border-radius:4px;background:#4a4a4a"></div>
<div style="left:1728px;top:61px;width:58px;height:1px;background:#4a4a4a"></div>
<div class="t" style="left:1733px;top:87px;color:#e0e0e0">1s</div>
<div style="left:1764px;top:71px;width:45px;height:45px;border-radius:50%;background:radial-gradient(circle at 50% 30%,#474747,#333 70%,#2a2a2a);border:1px solid #262626"><div style="left:34px;top:27px;width:5px;height:5px;border-radius:50%;background:#eee"></div></div>
<div class="t" style="left:1813px;top:70px;color:#e0e0e0">X</div>
<div style="left:1825px;top:67px;width:49px;height:20px;background:#404040;border:1px solid #333;border-top-color:#2e2e2e;border-radius:2px;color:#b0b0b0;text-align:right;padding:0 3px;line-height:20px;white-space:nowrap;overflow:hidden;">86,0</div>
<div class="t" style="left:1813px;top:104px;color:#e0e0e0">Y</div>
<div style="left:1825px;top:101px;width:49px;height:20px;background:#404040;border:1px solid #333;border-top-color:#2e2e2e;border-radius:2px;color:#b0b0b0;text-align:right;padding:0 3px;line-height:20px;white-space:nowrap;overflow:hidden;">10,0</div>
<div class="t" style="left:1873px;top:87px;color:#e0e0e0">Pixels</div>
<div style="left:1715px;top:126px;width:194px;height:324px;background:#333;border:1px solid #2c2c2c;border-radius:3px;overflow:hidden"></div>
<div class="t" style="left:1716px;top:129px;color:#f0f0f0">ments\PElectro\Examples\AmpliOp.</div>
<div class="t" style="left:1716px;top:240px;color:#e0e0e0">12, Pad2=0, 13, Nodes=11</div>
<div class="t" style="left:1716px;top:256px;color:#e0e0e0">', 10, Pad2=4, 4, Nodes=18</div>
<div class="t" style="left:1716px;top:272px;color:#e0e0e0">', 6, Pad2=0, 5, Nodes=17</div>
<div class="t" style="left:1716px;top:351px;color:#e0e0e0">12, Pad2=0, 13, Nodes=11</div>
<div class="t" style="left:1716px;top:367px;color:#e0e0e0">', 10, Pad2=4, 4, Nodes=18</div>
<div style="left:1716px;top:432px;width:192px;height:17px;background:linear-gradient(#555,#3a3a3a);border-radius:0 0 3px 3px"></div>
<div style="left:1738px;top:434px;width:148px;height:13px;background:linear-gradient(#333,#4a4a4a);border-radius:7px"></div>
<div style="left:1845px;top:435px;width:34px;height:11px;background:linear-gradient(#e8c050,#c09020);border-radius:6px"></div>
<svg style="position:absolute;left:1722px;top:435px" width="7" height="10"><path d="M7 0 L0 5 L7 10z" fill="#000"/></svg>
<svg style="position:absolute;left:1893px;top:435px" width="7" height="10"><path d="M0 0 L7 5 L0 10z" fill="#000"/></svg>
<div style="left:1715px;top:455px;width:97px;height:24px;background:linear-gradient(#595959,#4c4c4c);border:1px solid #3a3a3a;border-bottom:none;border-radius:4px 4px 0 0"></div>
<svg style="position:absolute;left:1718px;top:461px" width="16" height="13"><rect x="0.5" y="0.5" width="15" height="12" fill="#fff" stroke="#000"/><rect x="0.5" y="0.5" width="15" height="2" fill="#2020a0"/><rect x="2" y="4" width="4" height="2" fill="#000"/><rect x="2" y="7" width="4" height="2" fill="#40a0a0"/><path d="M8 4 v5 h6 v-5" stroke="#000" fill="none"/><path d="M2 11 h12" stroke="#000" stroke-dasharray="2 1"/></svg>
<div class="t" style="left:1757px;top:461px;color:#f2f2f2;font-size:12.5px">.spElc</div>
<div style="left:1813px;top:457px;width:96px;height:22px;background:#434343;border:1px solid #3a3a3a;border-bottom:none;border-radius:4px 4px 0 0"></div>
<div class="t" style="left:1817px;top:462px;color:#000;font-size:17px">Σ</div>
<div class="t" style="left:1859px;top:462px;color:#f2f2f2;font-size:12.5px">.LIB</div>
<div style="left:1715px;top:478px;width:194px;height:22px;background:#383838"></div>
<div style="left:1715px;top:500px;width:194px;height:529px;background:#474747"></div>
<div style="left:1721px;top:499px;width:32px;height:16px;background:#fff;border:1px solid #16167a"><div style="left:26px;top:11px;width:1px;height:1px;background:#222"></div><div style="left:23px;top:4px;width:5px;height:1px;background:#222"></div><div style="left:23px;top:7px;width:5px;height:1px;background:#222"></div></div>
<div class="t" style="left:1757px;top:499px;color:#1a1a1a">Essai-Counter-FlipFlo...</div>
<div style="left:1721px;top:519px;width:32px;height:16px;background:#fff;border:1px solid #16167a"><div style="left:9px;top:9px;width:3px;height:2px;background:#222"></div><div style="left:8px;top:6px;width:3px;height:1px;background:#222"></div><div style="left:16px;top:5px;width:1px;height:2px;background:#222"></div><div style="left:23px;top:8px;width:1px;height:1px;background:#222"></div><div style="left:19px;top:3px;width:3px;height:1px;background:#222"></div><div style="left:19px;top:9px;width:3px;height:1px;background:#222"></div></div>
<div class="t" style="left:1757px;top:519px;color:#1a1a1a">Essai-Divers</div>
<div style="left:1721px;top:539px;width:32px;height:16px;background:#fff;border:1px solid #16167a"><div style="left:21px;top:7px;width:2px;height:1px;background:#222"></div><div style="left:13px;top:11px;width:2px;height:1px;background:#222"></div><div style="left:8px;top:6px;width:3px;height:2px;background:#222"></div><div style="left:21px;top:7px;width:5px;height:1px;background:#222"></div><div style="left:20px;top:5px;width:5px;height:1px;background:#222"></div><div style="left:12px;top:6px;width:1px;height:2px;background:#222"></div></div>
<div class="t" style="left:1757px;top:539px;color:#1a1a1a">Essai-Enregistrement</div>
<div style="left:1721px;top:559px;width:32px;height:16px;background:#fff;border:1px solid #16167a"><div style="left:26px;top:5px;width:1px;height:1px;background:#222"></div><div style="left:14px;top:5px;width:1px;height:2px;background:#222"></div><div style="left:12px;top:7px;width:1px;height:1px;background:#222"></div><div style="left:22px;top:4px;width:1px;height:2px;background:#222"></div><div style="left:13px;top:10px;width:3px;height:2px;background:#222"></div></div>
<div class="t" style="left:1757px;top:559px;color:#1a1a1a">essai-ILR</div>
<div style="left:1721px;top:579px;width:32px;height:16px;background:#fff;border:1px solid #16167a"><div style="left:23px;top:4px;width:3px;height:1px;background:#222"></div><div style="left:9px;top:5px;width:1px;height:2px;background:#222"></div></div>
<div class="t" style="left:1757px;top:579px;color:#1a1a1a">Essai-Modulate</div>
<div style="left:1721px;top:599px;width:32px;height:16px;background:#fff;border:1px solid #16167a"><div style="left:21px;top:4px;width:1px;height:1px;background:#222"></div><div style="left:22px;top:8px;width:1px;height:2px;background:#222"></div><div style="left:13px;top:8px;width:2px;height:1px;background:#222"></div><div style="left:18px;top:7px;width:3px;height:2px;background:#222"></div><div style="left:20px;top:6px;width:5px;height:1px;background:#222"></div></div>
<div class="t" style="left:1757px;top:599px;color:#1a1a1a">essai-nix</div>
<div style="left:1721px;top:619px;width:32px;height:16px;background:#fff;border:1px solid #16167a"><div style="left:21px;top:10px;width:2px;height:1px;background:#222"></div><div style="left:17px;top:8px;width:1px;height:1px;background:#222"></div><div style="left:23px;top:3px;width:1px;height:1px;background:#222"></div><div style="left:11px;top:7px;width:1px;height:2px;background:#222"></div></div>
<div class="t" style="left:1757px;top:619px;color:#1a1a1a">Essai-stimulus</div>
<div style="left:1721px;top:639px;width:32px;height:16px;background:#fff;border:1px solid #16167a"></div>
<div class="t" style="left:1757px;top:639px;color:#1a1a1a">Essai-TF</div>
<div style="left:1721px;top:659px;width:32px;height:16px;background:#fff;border:1px solid #16167a"></div>
<div class="t" style="left:1757px;top:659px;color:#1a1a1a">Essai-TR</div>
<div style="left:1721px;top:679px;width:32px;height:16px;background:#fff;border:1px solid #16167a"><div style="left:17px;top:9px;width:1px;height:1px;background:#222"></div><div style="left:17px;top:7px;width:5px;height:1px;background:#222"></div></div>
<div class="t" style="left:1757px;top:679px;color:#1a1a1a">Essai-TransformateurV...</div>
<div style="left:1721px;top:699px;width:32px;height:16px;background:#f00000;border-radius:6px"></div>
<div class="t" style="left:1757px;top:699px;color:#1a1a1a">essai</div>
<div style="left:1721px;top:719px;width:32px;height:16px;background:#fff;border:1px solid #16167a"></div>
<div class="t" style="left:1757px;top:719px;color:#f4f4f4">AmpliOp</div>
<div style="left:1721px;top:739px;width:32px;height:16px;background:#fff;border:1px solid #16167a"></div>
<div class="t" style="left:1757px;top:739px;color:#1a1a1a">AvalNpn2</div>
<div style="left:1721px;top:759px;width:32px;height:16px;background:#fff;border:1px solid #16167a"></div>
<div class="t" style="left:1757px;top:759px;color:#1a1a1a">Cas1-LTSpice-PElectro</div>
<div style="left:1721px;top:779px;width:32px;height:16px;background:#fff;border:1px solid #16167a"><div style="left:14px;top:11px;width:2px;height:1px;background:#222"></div><div style="left:9px;top:11px;width:1px;height:2px;background:#222"></div><div style="left:15px;top:7px;width:3px;height:2px;background:#222"></div><div style="left:14px;top:8px;width:3px;height:1px;background:#222"></div><div style="left:16px;top:6px;width:1px;height:1px;background:#222"></div><div style="left:22px;top:11px;width:2px;height:1px;background:#222"></div></div>
<div class="t" style="left:1757px;top:779px;color:#1a1a1a">Cas2-LTSpice-PElectro</div>
<div style="left:1721px;top:799px;width:32px;height:16px;background:#fff;border:1px solid #16167a"><div style="left:10px;top:9px;width:2px;height:1px;background:#222"></div><div style="left:14px;top:4px;width:2px;height:1px;background:#222"></div><div style="left:13px;top:6px;width:2px;height:1px;background:#222"></div></div>
<div class="t" style="left:1757px;top:799px;color:#1a1a1a">Cas3-LTSpice-PElectro</div>
<div style="left:1721px;top:819px;width:32px;height:16px;background:#fff;border:1px solid #16167a"><div style="left:14px;top:4px;width:5px;height:1px;background:#222"></div><div style="left:18px;top:11px;width:2px;height:2px;background:#222"></div><div style="left:17px;top:8px;width:3px;height:1px;background:#222"></div><div style="left:25px;top:11px;width:1px;height:1px;background:#222"></div></div>
<div class="t" style="left:1757px;top:819px;color:#1a1a1a">Cas7-LTSpice-PElectro</div>
<div style="left:1721px;top:839px;width:32px;height:16px;background:#fff;border:1px solid #16167a"><div style="left:14px;top:7px;width:1px;height:2px;background:#222"></div><div style="left:19px;top:6px;width:3px;height:2px;background:#222"></div><div style="left:26px;top:5px;width:1px;height:1px;background:#222"></div><div style="left:22px;top:6px;width:5px;height:1px;background:#222"></div><div style="left:20px;top:5px;width:2px;height:1px;background:#222"></div><div style="left:23px;top:4px;width:3px;height:1px;background:#222"></div></div>
<div class="t" style="left:1757px;top:839px;color:#1a1a1a">CD4011 oscillator</div>
<div style="left:1721px;top:859px;width:32px;height:16px;background:#fff;border:1px solid #16167a"><div style="left:24px;top:7px;width:1px;height:2px;background:#222"></div><div style="left:20px;top:6px;width:2px;height:1px;background:#222"></div><div style="left:11px;top:11px;width:1px;height:1px;background:#222"></div><div style="left:16px;top:6px;width:1px;height:1px;background:#222"></div><div style="left:22px;top:5px;width:1px;height:1px;background:#222"></div><div style="left:10px;top:7px;width:1px;height:1px;background:#222"></div></div>
<div class="t" style="left:1757px;top:859px;color:#1a1a1a">Colpitt 58MHz</div>
<div style="left:1721px;top:879px;width:32px;height:16px;background:#fff;border:1px solid #16167a"><div style="left:21px;top:11px;width:1px;height:1px;background:#222"></div><div style="left:23px;top:6px;width:3px;height:2px;background:#222"></div><div style="left:12px;top:5px;width:3px;height:1px;background:#222"></div><div style="left:13px;top:3px;width:5px;height:1px;background:#222"></div><div style="left:14px;top:6px;width:5px;height:1px;background:#222"></div><div style="left:19px;top:9px;width:3px;height:2px;background:#222"></div></div>
<div class="t" style="left:1757px;top:879px;color:#1a1a1a">Controlled Sources</div>
<div style="left:1721px;top:899px;width:32px;height:16px;background:#fff;border:1px solid #16167a"><div style="left:9px;top:3px;width:1px;height:1px;background:#222"></div><div style="left:15px;top:4px;width:3px;height:1px;background:#222"></div><div style="left:12px;top:5px;width:1px;height:2px;background:#222"></div></div>
<div class="t" style="left:1757px;top:899px;color:#1a1a1a">GasFetAndStep</div>
<div style="left:1721px;top:919px;width:32px;height:16px;background:#fff;border:1px solid #16167a"><div style="left:20px;top:6px;width:1px;height:1px;background:#222"></div><div style="left:23px;top:5px;width:1px;height:1px;background:#222"></div><div style="left:10px;top:7px;width:2px;height:1px;background:#222"></div><div style="left:22px;top:9px;width:1px;height:1px;background:#222"></div></div>
<div class="t" style="left:1757px;top:919px;color:#1a1a1a">LTSpice-Astable</div>
<div style="left:1721px;top:939px;width:32px;height:16px;background:#fff;border:1px solid #16167a"><div style="left:23px;top:6px;width:1px;height:1px;background:#222"></div><div style="left:8px;top:8px;width:2px;height:1px;background:#222"></div><div style="left:18px;top:5px;width:1px;height:1px;background:#222"></div><div style="left:15px;top:4px;width:1px;height:1px;background:#222"></div><div style="left:20px;top:9px;width:3px;height:1px;background:#222"></div><div style="left:25px;top:4px;width:3px;height:1px;background:#222"></div></div>
<div class="t" style="left:1757px;top:939px;color:#1a1a1a">LTSpice-Cohn</div>
<div style="left:1721px;top:959px;width:32px;height:16px;background:#fff;border:1px solid #16167a"><div style="left:17px;top:7px;width:3px;height:1px;background:#222"></div><div style="left:20px;top:4px;width:1px;height:1px;background:#222"></div></div>
<div class="t" style="left:1757px;top:959px;color:#1a1a1a">LTSpice-Counter-FlipF...</div>
<div style="left:1721px;top:979px;width:32px;height:16px;background:#fff;border:1px solid #16167a"><div style="left:20px;top:9px;width:1px;height:2px;background:#222"></div><div style="left:22px;top:5px;width:3px;height:1px;background:#222"></div><div style="left:18px;top:5px;width:1px;height:1px;background:#222"></div><div style="left:12px;top:6px;width:1px;height:2px;background:#222"></div><div style="left:15px;top:6px;width:1px;height:1px;background:#222"></div><div style="left:9px;top:11px;width:5px;height:2px;background:#222"></div></div>
<div class="t" style="left:1757px;top:979px;color:#1a1a1a">LTSpice-curvetrace</div>
<div style="left:1721px;top:999px;width:32px;height:16px;background:#fff;border:1px solid #16167a"><div style="left:25px;top:10px;width:1px;height:1px;background:#222"></div><div style="left:23px;top:7px;width:1px;height:1px;background:#222"></div></div>
<div class="t" style="left:1757px;top:999px;color:#1a1a1a">LTSpice-DcopPnt</div>
<div style="left:1721px;top:1019px;width:32px;height:16px;background:#fff;border:1px solid #16167a"><div style="left:12px;top:5px;width:2px;height:2px;background:#222"></div><div style="left:23px;top:10px;width:3px;height:1px;background:#222"></div></div>
<div class="t" style="left:1757px;top:1019px;color:#1a1a1a">LTSpice-GFT</div>
<div style="left:1894px;top:500px;width:16px;height:525px;background:linear-gradient(90deg,#3a3a3a,#555 50%,#3c3c3c);border-left:1px solid #333;border-right:1px solid #333"></div><svg style="position:absolute;left:1897.0px;top:505px" width="10" height="8"><path d="M0 8 L5 0 L10 8z" fill="#000"/></svg><svg style="position:absolute;left:1897.0px;top:1012px" width="10" height="8"><path d="M0 0 L5 8 L10 0z" fill="#000"/></svg><div style="left:1896.0px;top:526px;width:12px;height:12px;border-radius:50%;background:radial-gradient(circle at 40% 35%,#f0c850,#c09020 60%,#8a6a10)"></div>
<div style="left:8px;top:1029px;width:1904px;height:2px;background:#3c3c3c"></div>
<div style="left:0px;top:1031px;width:1920px;height:3px;background:#e6e6e8"></div>
<div class="t" style="left:15px;top:1027px;color:#222;font-size:12px">1 élément(s)</div><div class="t" style="left:115px;top:1027px;color:#222;font-size:12px">1 élément sélectionné 433 Ko</div>
<div style="left:0px;top:1031px;width:1920px;height:3px;background:rgba(230,230,232,0.55)"></div>
</body></html>
